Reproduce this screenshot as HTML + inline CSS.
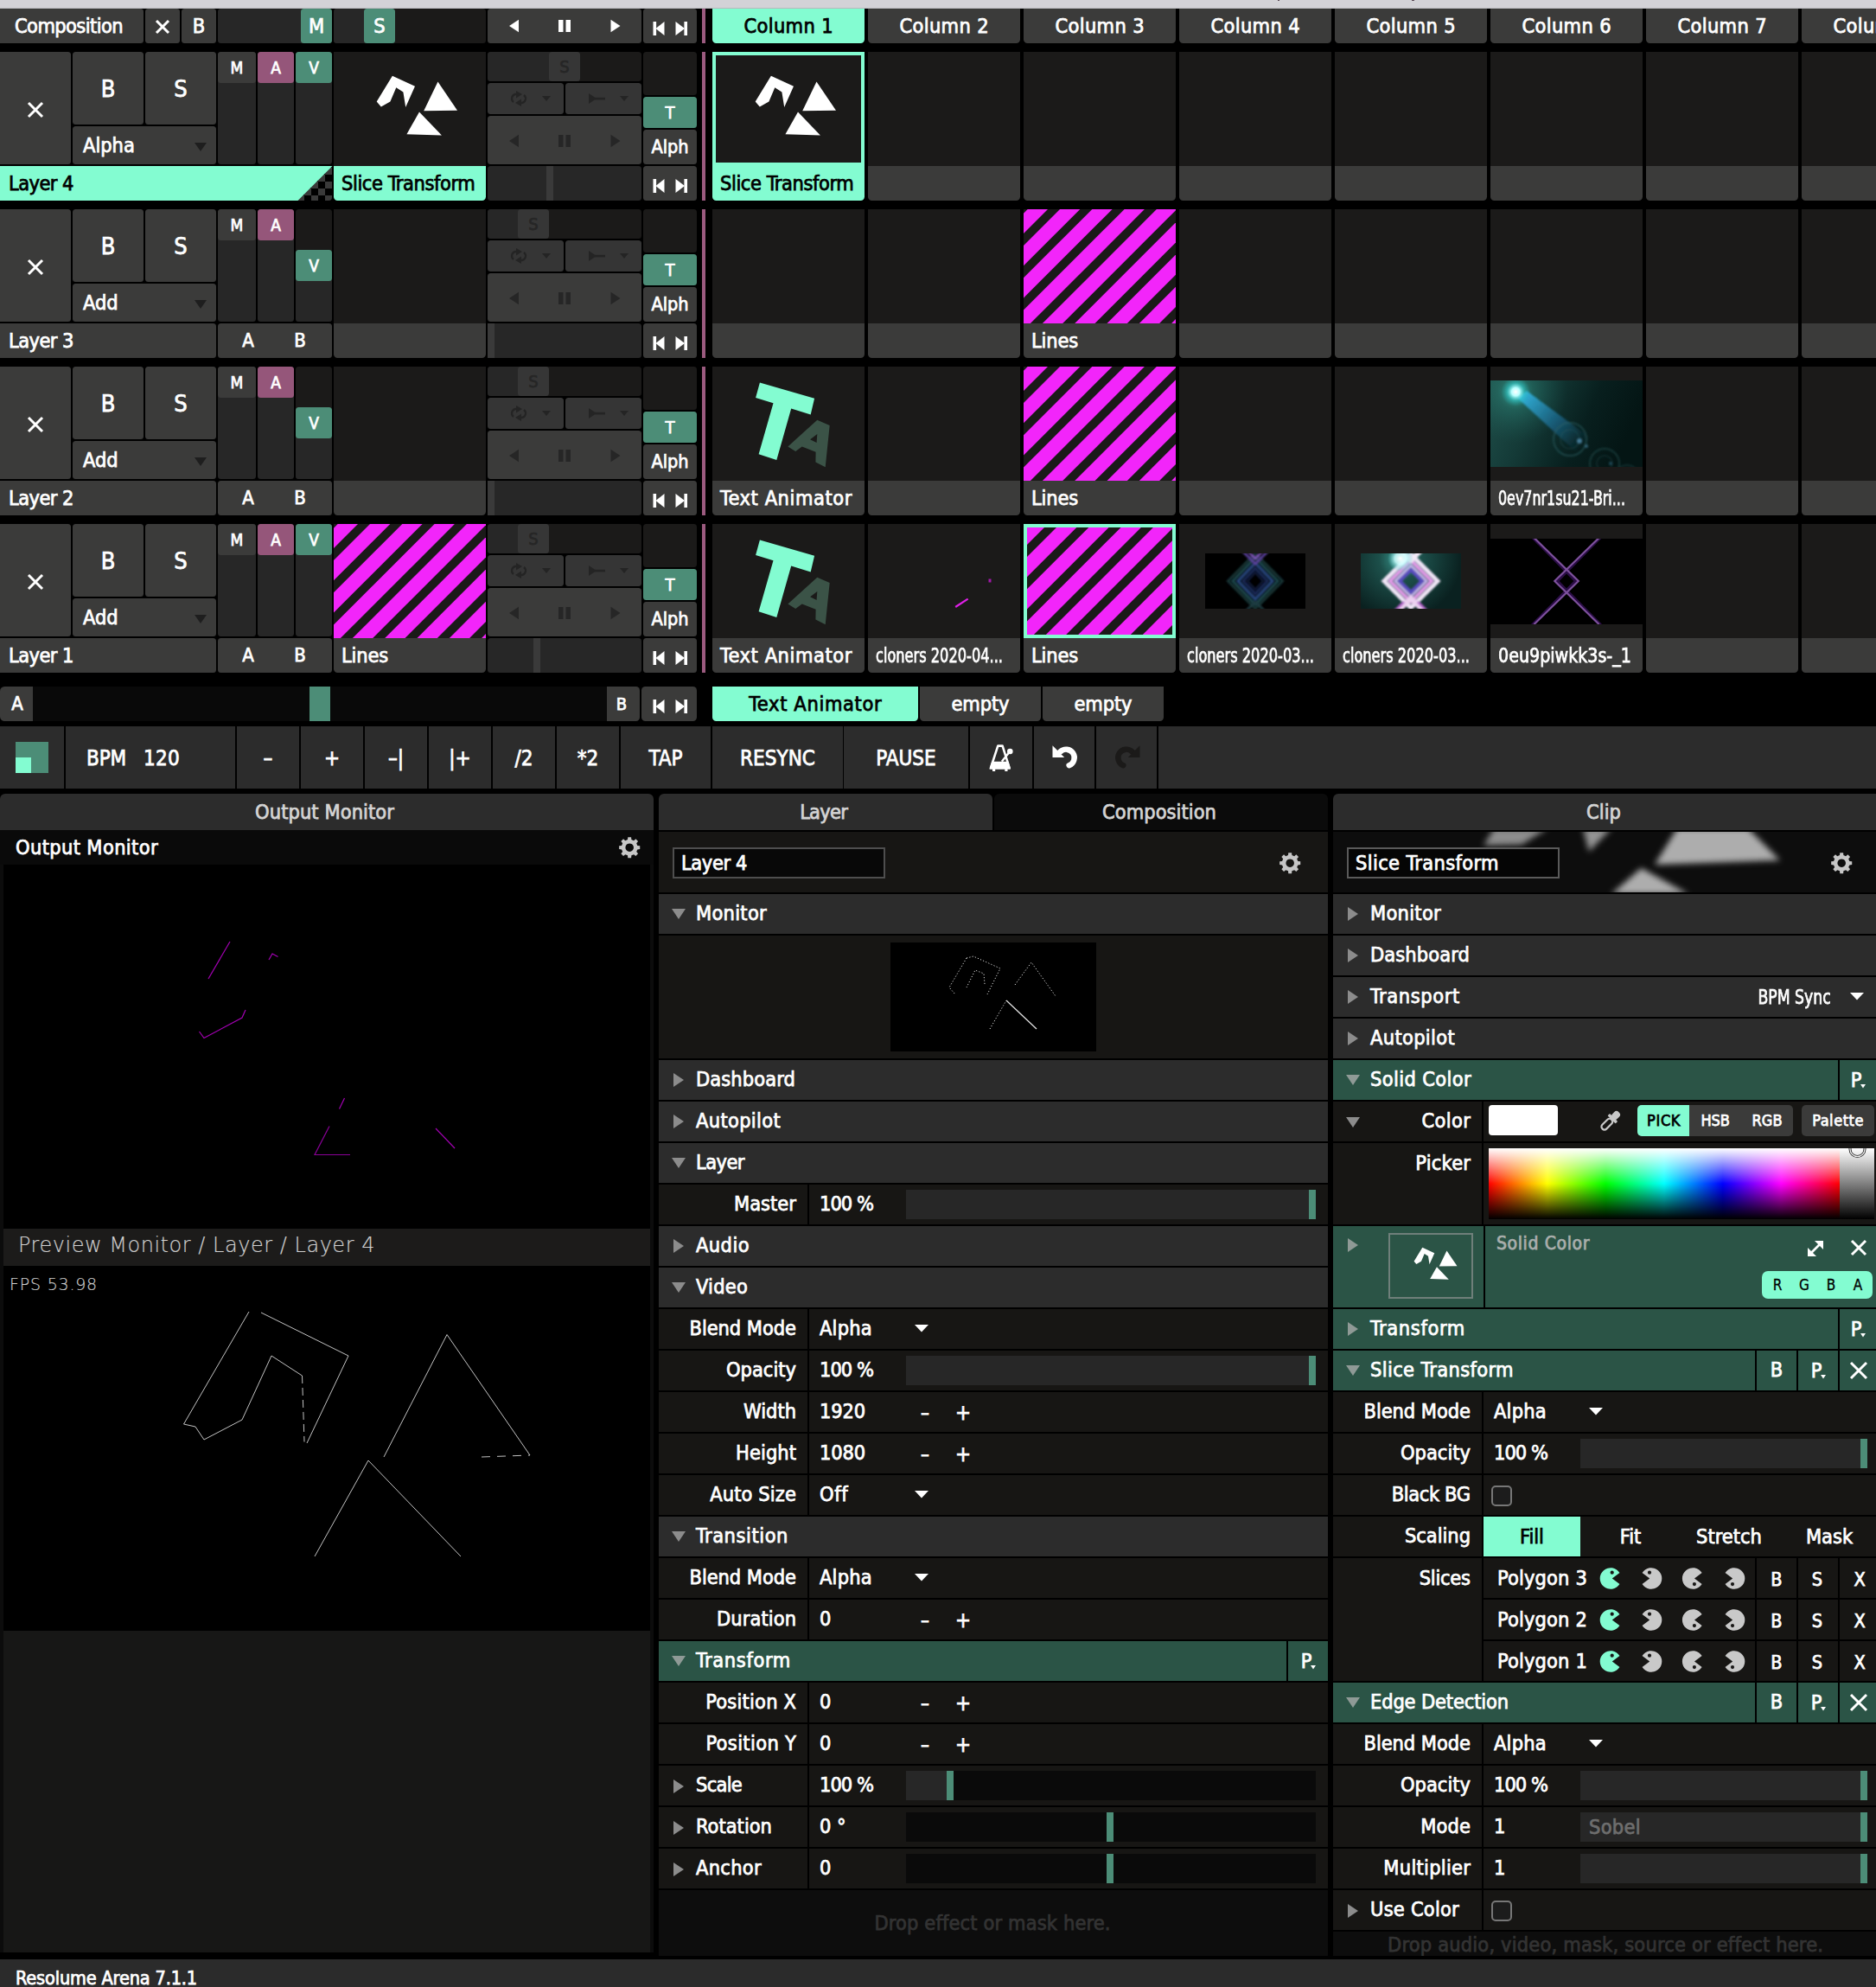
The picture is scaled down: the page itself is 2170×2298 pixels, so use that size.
<!DOCTYPE html>
<html><head><meta charset="utf-8"><title>Resolume Arena</title>
<style>
html,body{margin:0;padding:0;background:#000;}
body{width:2170px;height:2298px;position:relative;overflow:hidden;font-family:"DejaVu Sans Condensed","DejaVu Sans","Liberation Sans",sans-serif;font-stretch:condensed;}
body>div,body>span,body>svg{position:absolute;display:block;box-sizing:border-box;}
body>span{overflow:visible;-webkit-text-stroke:0.75px currentColor;}
</style></head><body>
<div style="left:0px;top:0px;width:2170px;height:10px;background:#d3d2d7;"></div>
<div style="left:0px;top:9px;width:2170px;height:1px;background:#b9b8bd;"></div>
<div style="left:1477.5px;top:0px;width:2.5px;height:1.2px;background:#5a4a55;"></div>
<div style="left:1633px;top:0px;width:2.5px;height:1.2px;background:#5a4a55;"></div>
<div style="left:0px;top:10px;width:166px;height:40px;background:#3b3b3a;border-radius:0 3.5px 3.5px 0;"></div>
<span style="top:10px;height:40px;line-height:40px;font-size:23.4px;color:#fff;white-space:nowrap;letter-spacing:-0.589px;left:17px;">Composition</span>
<div style="left:168px;top:10px;width:40px;height:40px;background:#3b3b3a;border-radius:3.5px;"></div>
<svg style="left:178.5px;top:21.5px;" width="18" height="18" viewBox="0 0 18 18"><path d="M2 2 L16 16 M16 2 L2 16" stroke="#fff" stroke-width="3" fill="none"/></svg>
<div style="left:210px;top:10px;width:40px;height:40px;background:#3b3b3a;border-radius:3.5px;"></div>
<span style="top:10px;height:40px;line-height:40px;font-size:23.4px;color:#fff;white-space:nowrap;left:-170px;width:800px;text-align:center;">B</span>
<div style="left:252px;top:10px;width:132px;height:40px;background:#272727;border-radius:3.5px;"></div>
<div style="left:348px;top:10px;width:36px;height:40px;background:#4c8d77;border-radius:3.5px;"></div>
<span style="top:10px;height:40px;line-height:40px;font-size:23.4px;color:#fff;white-space:nowrap;left:-34px;width:800px;text-align:center;">M</span>
<div style="left:386px;top:10px;width:176px;height:40px;background:#1b1a19;border-radius:3.5px;"></div>
<div style="left:386px;top:10px;width:40px;height:40px;background:#272727;border-radius:3.5px 0 0 3.5px;"></div>
<div style="left:421px;top:10px;width:36px;height:40px;background:#4c8d77;border-radius:3.5px;"></div>
<span style="top:10px;height:40px;line-height:40px;font-size:23.4px;color:#fff;white-space:nowrap;left:39px;width:800px;text-align:center;">S</span>
<div style="left:564px;top:10px;width:178px;height:40px;background:#3b3b3a;border-radius:3.5px;"></div>
<svg style="left:564px;top:10.2px;" width="178" height="40" viewBox="0 0 178 40"><polygon points="25,20 36,12.75 36,27.25" fill="#fff"/><rect x="82" y="13" width="5.5" height="14" fill="#fff"/><rect x="90.5" y="13" width="5.5" height="14" fill="#fff"/><polygon points="153.5,20 142.5,12.75 142.5,27.25" fill="#fff"/></svg>
<div style="left:744px;top:10px;width:62px;height:40px;background:#3b3b3a;border-radius:3.5px;"></div>
<svg style="left:744px;top:13px;" width="62" height="40" viewBox="0 0 62 40"><rect x="11.5" y="12" width="3.6" height="16" fill="#fff"/><polygon points="14.5,20 24.5,12 24.5,28" fill="#fff"/><polygon points="48,20 37.5,12 37.5,28" fill="#fff"/><rect x="47.4" y="12" width="3.6" height="16" fill="#fff"/></svg>
<div style="left:812px;top:10px;width:3.5px;height:40px;background:#9b5a7f;"></div>
<div style="left:0px;top:60px;width:82px;height:130px;background:#3b3b3a;border-radius:0 3.5px 3.5px 0;"></div>
<svg style="left:31px;top:117px;" width="20" height="20" viewBox="0 0 20 20"><path d="M2 2 L18 18 M18 2 L2 18" stroke="#fff" stroke-width="3" fill="none"/></svg>
<div style="left:84px;top:60px;width:82px;height:84px;background:#3b3b3a;border-radius:3.5px;"></div>
<span style="top:61px;height:84px;line-height:84px;font-size:27px;color:#fff;white-space:nowrap;left:-275px;width:800px;text-align:center;">B</span>
<div style="left:168px;top:60px;width:82px;height:84px;background:#3b3b3a;border-radius:3.5px;"></div>
<span style="top:61px;height:84px;line-height:84px;font-size:27px;color:#fff;white-space:nowrap;left:-191px;width:800px;text-align:center;">S</span>
<div style="left:84px;top:146px;width:166px;height:44px;background:#3b3b3a;border-radius:3.5px;"></div>
<span style="top:146px;height:44px;line-height:44px;font-size:23.4px;color:#fff;white-space:nowrap;left:96px;">Alpha</span>
<svg style="left:224px;top:164px;" width="16" height="12" viewBox="0 0 16 12"><polygon points="1,1 15,1 8,11" fill="#1e1e1e"/></svg>
<svg style="left:0px;top:192px;" width="386" height="40" viewBox="0 0 386 40"><defs><pattern id="chk" x="0" y="2" width="16" height="16" patternUnits="userSpaceOnUse"><rect width="16" height="16" fill="#000"/><rect x="8" y="0" width="8" height="8" fill="#3a3a3a"/><rect x="0" y="8" width="8" height="8" fill="#3a3a3a"/></pattern></defs><path d="M340 0 H384 V36 Q384 40 380 40 H340 Z" fill="url(#chk)"/><polygon points="0,0 384.5,0 344.5,40 0,40" fill="#83fcd1"/></svg>
<span style="top:192px;height:40px;line-height:40px;font-size:23.4px;color:#000;white-space:nowrap;letter-spacing:-0.537px;left:10px;">Layer 4</span>
<div style="left:252px;top:60px;width:44px;height:130px;background:#272727;border-radius:3.5px;"></div>
<div style="left:252px;top:60px;width:44px;height:36px;background:#3b3b3a;border-radius:3.5px;"></div>
<span style="top:60px;height:36px;line-height:36px;font-size:19px;color:#fff;white-space:nowrap;left:-126px;width:800px;text-align:center;">M</span>
<div style="left:298px;top:60px;width:42px;height:130px;background:#272727;border-radius:3.5px;"></div>
<div style="left:298px;top:60px;width:42px;height:36px;background:#95567a;border-radius:3.5px;"></div>
<span style="top:60px;height:36px;line-height:36px;font-size:19px;color:#fff;white-space:nowrap;left:-81px;width:800px;text-align:center;">A</span>
<div style="left:342px;top:60px;width:42px;height:130px;background:#272727;border-radius:3.5px;"></div>
<div style="left:342px;top:60px;width:42px;height:36px;background:#4c8d77;border-radius:3.5px;"></div>
<span style="top:60px;height:36px;line-height:36px;font-size:19px;color:#fff;white-space:nowrap;left:-37px;width:800px;text-align:center;">V</span>
<div style="left:386px;top:60px;width:176px;height:132px;background:#1b1a19;"></div>
<svg style="left:386px;top:60px;overflow:hidden;" width="176" height="132" viewBox="0 0 176 132"><polygon points="67.9,27.8 94,39.8 83.2,63.9 80.4,46.4 72.3,41.3 65.4,57.6 54.8,63.6 49.7,57.6" fill="#fff"/><polygon points="120.5,34.5 143,67.7 104.2,68.3" fill="#fff"/><polygon points="99,69.5 124.9,96.5 84.4,95.2" fill="#fff"/></svg>
<div style="left:386px;top:192px;width:176px;height:40px;background:#83fcd1;border-radius:0 0 4.5px 4.5px;"></div>
<span style="top:192px;height:40px;line-height:40px;font-size:23.4px;color:#000;white-space:nowrap;letter-spacing:-0.406px;left:395px;">Slice Transform</span>
<div style="left:564px;top:60px;width:178px;height:34px;background:#1b1a19;border-radius:3.5px;"></div>
<div style="left:564px;top:60px;width:81px;height:34px;background:#272727;border-radius:3.5px 0 0 3.5px;"></div>
<div style="left:635px;top:60px;width:36px;height:34px;background:#363636;border-radius:3.5px;"></div>
<span style="top:60px;height:34px;line-height:34px;font-size:20px;color:#262626;white-space:nowrap;left:253px;width:800px;text-align:center;">S</span>
<div style="left:564px;top:96px;width:88px;height:36px;background:#353535;border-radius:3.5px;"></div>
<div style="left:654px;top:96px;width:88px;height:36px;background:#353535;border-radius:3.5px;"></div>
<svg style="left:564px;top:96px;" width="88" height="36" viewBox="0 0 88 36"><g fill="none" stroke="#242424" stroke-width="2.4"><path d="M30 22 a5 5 0 1 1 6 -8 M42 14 a5 5 0 1 1 -6 8"/></g><polygon points="33,9 40,13 33,17.5" fill="#242424"/><polygon points="39,27 32,23 39,18.5" fill="#242424"/><polygon points="63,15 73,15 68,21" fill="#242424"/></svg>
<svg style="left:654px;top:96px;" width="88" height="36" viewBox="0 0 88 36"><polygon points="27,12 27,24 36,18" fill="#242424"/><rect x="34" y="16.8" width="12" height="2.6" fill="#242424"/><polygon points="63,15 73,15 68,21" fill="#242424"/></svg>
<div style="left:564px;top:134px;width:178px;height:56px;background:#3b3b3a;border-radius:3.5px;"></div>
<svg style="left:564px;top:143px;" width="178" height="40" viewBox="0 0 178 40"><polygon points="25,20 36,12.75 36,27.25" fill="#262626"/><rect x="82" y="13" width="5.5" height="14" fill="#262626"/><rect x="90.5" y="13" width="5.5" height="14" fill="#262626"/><polygon points="153.5,20 142.5,12.75 142.5,27.25" fill="#262626"/></svg>
<div style="left:564px;top:192px;width:178px;height:40px;background:#272727;border-radius:3.5px;"></div>
<div style="left:632px;top:192px;width:8px;height:40px;background:#3a3a3a;"></div>
<div style="left:744px;top:60px;width:62px;height:50px;background:#1b1a19;border-radius:3.5px;"></div>
<div style="left:744px;top:112px;width:62px;height:36px;background:#4c8d77;border-radius:3.5px;"></div>
<span style="top:112px;height:36px;line-height:36px;font-size:20px;color:#fff;white-space:nowrap;left:375px;width:800px;text-align:center;">T</span>
<div style="left:744px;top:150px;width:62px;height:40px;background:#3b3b3a;border-radius:3.5px;"></div>
<span style="top:150px;height:40px;line-height:40px;font-size:21.5px;color:#fff;white-space:nowrap;left:375px;width:800px;text-align:center;">Alph</span>
<div style="left:744px;top:192px;width:62px;height:40px;background:#3b3b3a;border-radius:3.5px;"></div>
<svg style="left:744px;top:195px;" width="62" height="40" viewBox="0 0 62 40"><rect x="11.5" y="12" width="3.6" height="16" fill="#fff"/><polygon points="14.5,20 24.5,12 24.5,28" fill="#fff"/><polygon points="48,20 37.5,12 37.5,28" fill="#fff"/><rect x="47.4" y="12" width="3.6" height="16" fill="#fff"/></svg>
<div style="left:812px;top:60px;width:3.5px;height:172px;background:#9b5a7f;"></div>
<div style="left:824px;top:60px;width:176px;height:132px;background:#1b1a19;"></div>
<svg style="left:824px;top:60px;overflow:hidden;" width="176" height="132" viewBox="0 0 176 132"><polygon points="67.9,27.8 94,39.8 83.2,63.9 80.4,46.4 72.3,41.3 65.4,57.6 54.8,63.6 49.7,57.6" fill="#fff"/><polygon points="120.5,34.5 143,67.7 104.2,68.3" fill="#fff"/><polygon points="99,69.5 124.9,96.5 84.4,95.2" fill="#fff"/></svg>
<div style="left:824px;top:192px;width:176px;height:40px;background:#83fcd1;border-radius:0 0 4.5px 4.5px;"></div>
<span style="top:192px;height:40px;line-height:40px;font-size:23.4px;color:#000;white-space:nowrap;letter-spacing:-0.406px;left:833px;">Slice Transform</span>
<div style="left:824px;top:60px;width:176px;height:132px;border:4px solid #83fcd1;border-bottom-width:4px;"></div>
<div style="left:1004px;top:60px;width:176px;height:132px;background:#1b1a19;"></div>
<div style="left:1004px;top:192px;width:176px;height:40px;background:#3b3b3a;border-radius:0 0 4.5px 4.5px;"></div>
<div style="left:1184px;top:60px;width:176px;height:132px;background:#1b1a19;"></div>
<div style="left:1184px;top:192px;width:176px;height:40px;background:#3b3b3a;border-radius:0 0 4.5px 4.5px;"></div>
<div style="left:1364px;top:60px;width:176px;height:132px;background:#1b1a19;"></div>
<div style="left:1364px;top:192px;width:176px;height:40px;background:#3b3b3a;border-radius:0 0 4.5px 4.5px;"></div>
<div style="left:1544px;top:60px;width:176px;height:132px;background:#1b1a19;"></div>
<div style="left:1544px;top:192px;width:176px;height:40px;background:#3b3b3a;border-radius:0 0 4.5px 4.5px;"></div>
<div style="left:1724px;top:60px;width:176px;height:132px;background:#1b1a19;"></div>
<div style="left:1724px;top:192px;width:176px;height:40px;background:#3b3b3a;border-radius:0 0 4.5px 4.5px;"></div>
<div style="left:1904px;top:60px;width:176px;height:132px;background:#1b1a19;"></div>
<div style="left:1904px;top:192px;width:176px;height:40px;background:#3b3b3a;border-radius:0 0 4.5px 4.5px;"></div>
<div style="left:2084px;top:60px;width:176px;height:132px;background:#1b1a19;"></div>
<div style="left:2084px;top:192px;width:176px;height:40px;background:#3b3b3a;border-radius:0 0 4.5px 4.5px;"></div>
<div style="left:0px;top:242px;width:82px;height:130px;background:#3b3b3a;border-radius:0 3.5px 3.5px 0;"></div>
<svg style="left:31px;top:299px;" width="20" height="20" viewBox="0 0 20 20"><path d="M2 2 L18 18 M18 2 L2 18" stroke="#fff" stroke-width="3" fill="none"/></svg>
<div style="left:84px;top:242px;width:82px;height:84px;background:#3b3b3a;border-radius:3.5px;"></div>
<span style="top:243px;height:84px;line-height:84px;font-size:27px;color:#fff;white-space:nowrap;left:-275px;width:800px;text-align:center;">B</span>
<div style="left:168px;top:242px;width:82px;height:84px;background:#3b3b3a;border-radius:3.5px;"></div>
<span style="top:243px;height:84px;line-height:84px;font-size:27px;color:#fff;white-space:nowrap;left:-191px;width:800px;text-align:center;">S</span>
<div style="left:84px;top:328px;width:166px;height:44px;background:#3b3b3a;border-radius:3.5px;"></div>
<span style="top:328px;height:44px;line-height:44px;font-size:23.4px;color:#fff;white-space:nowrap;left:96px;">Add</span>
<svg style="left:224px;top:346px;" width="16" height="12" viewBox="0 0 16 12"><polygon points="1,1 15,1 8,11" fill="#1e1e1e"/></svg>
<div style="left:0px;top:374px;width:250px;height:40px;background:#3b3b3a;border-radius:0 3.5px 3.5px 0;"></div>
<span style="top:374px;height:40px;line-height:40px;font-size:23.4px;color:#fff;white-space:nowrap;letter-spacing:-0.537px;left:10px;">Layer 3</span>
<div style="left:252px;top:374px;width:132px;height:40px;background:#3b3b3a;border-radius:3.5px;"></div>
<span style="top:374px;height:40px;line-height:40px;font-size:22px;color:#fff;white-space:nowrap;left:-113px;width:800px;text-align:center;">A</span>
<span style="top:374px;height:40px;line-height:40px;font-size:22px;color:#fff;white-space:nowrap;left:-53px;width:800px;text-align:center;">B</span>
<div style="left:252px;top:242px;width:44px;height:130px;background:#272727;border-radius:3.5px;"></div>
<div style="left:252px;top:242px;width:44px;height:36px;background:#3b3b3a;border-radius:3.5px;"></div>
<span style="top:242px;height:36px;line-height:36px;font-size:19px;color:#fff;white-space:nowrap;left:-126px;width:800px;text-align:center;">M</span>
<div style="left:298px;top:242px;width:42px;height:130px;background:#272727;border-radius:3.5px;"></div>
<div style="left:298px;top:242px;width:42px;height:36px;background:#95567a;border-radius:3.5px;"></div>
<span style="top:242px;height:36px;line-height:36px;font-size:19px;color:#fff;white-space:nowrap;left:-81px;width:800px;text-align:center;">A</span>
<div style="left:342px;top:242px;width:42px;height:130px;background:#1b1a19;border-radius:3.5px;"></div>
<div style="left:342px;top:302px;width:42px;height:70px;background:#272727;border-radius:0 0 3.5px 3.5px;"></div>
<div style="left:342px;top:289px;width:42px;height:36px;background:#4c8d77;border-radius:3.5px;"></div>
<span style="top:289px;height:36px;line-height:36px;font-size:19px;color:#fff;white-space:nowrap;left:-37px;width:800px;text-align:center;">V</span>
<div style="left:386px;top:242px;width:176px;height:132px;background:#1b1a19;"></div>
<div style="left:386px;top:374px;width:176px;height:40px;background:#3b3b3a;border-radius:0 0 4.5px 4.5px;"></div>
<div style="left:564px;top:242px;width:178px;height:34px;background:#1b1a19;border-radius:3.5px;"></div>
<div style="left:564px;top:242px;width:45px;height:34px;background:#272727;border-radius:3.5px 0 0 3.5px;"></div>
<div style="left:599px;top:242px;width:36px;height:34px;background:#363636;border-radius:3.5px;"></div>
<span style="top:242px;height:34px;line-height:34px;font-size:20px;color:#262626;white-space:nowrap;left:217px;width:800px;text-align:center;">S</span>
<div style="left:564px;top:278px;width:88px;height:36px;background:#353535;border-radius:3.5px;"></div>
<div style="left:654px;top:278px;width:88px;height:36px;background:#353535;border-radius:3.5px;"></div>
<svg style="left:564px;top:278px;" width="88" height="36" viewBox="0 0 88 36"><g fill="none" stroke="#242424" stroke-width="2.4"><path d="M30 22 a5 5 0 1 1 6 -8 M42 14 a5 5 0 1 1 -6 8"/></g><polygon points="33,9 40,13 33,17.5" fill="#242424"/><polygon points="39,27 32,23 39,18.5" fill="#242424"/><polygon points="63,15 73,15 68,21" fill="#242424"/></svg>
<svg style="left:654px;top:278px;" width="88" height="36" viewBox="0 0 88 36"><polygon points="27,12 27,24 36,18" fill="#242424"/><rect x="34" y="16.8" width="12" height="2.6" fill="#242424"/><polygon points="63,15 73,15 68,21" fill="#242424"/></svg>
<div style="left:564px;top:316px;width:178px;height:56px;background:#3b3b3a;border-radius:3.5px;"></div>
<svg style="left:564px;top:325px;" width="178" height="40" viewBox="0 0 178 40"><polygon points="25,20 36,12.75 36,27.25" fill="#262626"/><rect x="82" y="13" width="5.5" height="14" fill="#262626"/><rect x="90.5" y="13" width="5.5" height="14" fill="#262626"/><polygon points="153.5,20 142.5,12.75 142.5,27.25" fill="#262626"/></svg>
<div style="left:564px;top:374px;width:178px;height:40px;background:#272727;border-radius:3.5px;"></div>
<div style="left:564px;top:374px;width:8px;height:40px;background:#3a3a3a;"></div>
<div style="left:744px;top:242px;width:62px;height:50px;background:#1b1a19;border-radius:3.5px;"></div>
<div style="left:744px;top:294px;width:62px;height:36px;background:#4c8d77;border-radius:3.5px;"></div>
<span style="top:294px;height:36px;line-height:36px;font-size:20px;color:#fff;white-space:nowrap;left:375px;width:800px;text-align:center;">T</span>
<div style="left:744px;top:332px;width:62px;height:40px;background:#3b3b3a;border-radius:3.5px;"></div>
<span style="top:332px;height:40px;line-height:40px;font-size:21.5px;color:#fff;white-space:nowrap;left:375px;width:800px;text-align:center;">Alph</span>
<div style="left:744px;top:374px;width:62px;height:40px;background:#3b3b3a;border-radius:3.5px;"></div>
<svg style="left:744px;top:377px;" width="62" height="40" viewBox="0 0 62 40"><rect x="11.5" y="12" width="3.6" height="16" fill="#fff"/><polygon points="14.5,20 24.5,12 24.5,28" fill="#fff"/><polygon points="48,20 37.5,12 37.5,28" fill="#fff"/><rect x="47.4" y="12" width="3.6" height="16" fill="#fff"/></svg>
<div style="left:812px;top:242px;width:3.5px;height:172px;background:#9b5a7f;"></div>
<div style="left:824px;top:242px;width:176px;height:132px;background:#1b1a19;"></div>
<div style="left:824px;top:374px;width:176px;height:40px;background:#3b3b3a;border-radius:0 0 4.5px 4.5px;"></div>
<div style="left:1004px;top:242px;width:176px;height:132px;background:#1b1a19;"></div>
<div style="left:1004px;top:374px;width:176px;height:40px;background:#3b3b3a;border-radius:0 0 4.5px 4.5px;"></div>
<div style="left:1184px;top:242px;width:176px;height:132px;background:#1b1a19;"></div>
<svg style="left:1184px;top:242px;overflow:hidden;" width="176" height="132" viewBox="0 0 176 132"><rect width="176" height="132" fill="#f225fa"/><line x1="-29.6" y1="-10" x2="-189.6" y2="150" stroke="#1b1a19" stroke-width="9.9"/><line x1="7.7" y1="-10" x2="-152.3" y2="150" stroke="#1b1a19" stroke-width="9.9"/><line x1="45" y1="-10" x2="-115" y2="150" stroke="#1b1a19" stroke-width="9.9"/><line x1="82.3" y1="-10" x2="-77.7" y2="150" stroke="#1b1a19" stroke-width="9.9"/><line x1="119.6" y1="-10" x2="-40.4" y2="150" stroke="#1b1a19" stroke-width="9.9"/><line x1="156.9" y1="-10" x2="-3.1" y2="150" stroke="#1b1a19" stroke-width="9.9"/><line x1="194.2" y1="-10" x2="34.2" y2="150" stroke="#1b1a19" stroke-width="9.9"/><line x1="231.5" y1="-10" x2="71.5" y2="150" stroke="#1b1a19" stroke-width="9.9"/><line x1="268.8" y1="-10" x2="108.8" y2="150" stroke="#1b1a19" stroke-width="9.9"/><line x1="306.1" y1="-10" x2="146.1" y2="150" stroke="#1b1a19" stroke-width="9.9"/><line x1="343.4" y1="-10" x2="183.4" y2="150" stroke="#1b1a19" stroke-width="9.9"/></svg>
<div style="left:1184px;top:374px;width:176px;height:40px;background:#3b3b3a;border-radius:0 0 4.5px 4.5px;"></div>
<span style="top:374px;height:40px;line-height:40px;font-size:23.4px;color:#fff;white-space:nowrap;letter-spacing:-0.169px;left:1193px;">Lines</span>
<div style="left:1364px;top:242px;width:176px;height:132px;background:#1b1a19;"></div>
<div style="left:1364px;top:374px;width:176px;height:40px;background:#3b3b3a;border-radius:0 0 4.5px 4.5px;"></div>
<div style="left:1544px;top:242px;width:176px;height:132px;background:#1b1a19;"></div>
<div style="left:1544px;top:374px;width:176px;height:40px;background:#3b3b3a;border-radius:0 0 4.5px 4.5px;"></div>
<div style="left:1724px;top:242px;width:176px;height:132px;background:#1b1a19;"></div>
<div style="left:1724px;top:374px;width:176px;height:40px;background:#3b3b3a;border-radius:0 0 4.5px 4.5px;"></div>
<div style="left:1904px;top:242px;width:176px;height:132px;background:#1b1a19;"></div>
<div style="left:1904px;top:374px;width:176px;height:40px;background:#3b3b3a;border-radius:0 0 4.5px 4.5px;"></div>
<div style="left:2084px;top:242px;width:176px;height:132px;background:#1b1a19;"></div>
<div style="left:2084px;top:374px;width:176px;height:40px;background:#3b3b3a;border-radius:0 0 4.5px 4.5px;"></div>
<div style="left:0px;top:424px;width:82px;height:130px;background:#3b3b3a;border-radius:0 3.5px 3.5px 0;"></div>
<svg style="left:31px;top:481px;" width="20" height="20" viewBox="0 0 20 20"><path d="M2 2 L18 18 M18 2 L2 18" stroke="#fff" stroke-width="3" fill="none"/></svg>
<div style="left:84px;top:424px;width:82px;height:84px;background:#3b3b3a;border-radius:3.5px;"></div>
<span style="top:425px;height:84px;line-height:84px;font-size:27px;color:#fff;white-space:nowrap;left:-275px;width:800px;text-align:center;">B</span>
<div style="left:168px;top:424px;width:82px;height:84px;background:#3b3b3a;border-radius:3.5px;"></div>
<span style="top:425px;height:84px;line-height:84px;font-size:27px;color:#fff;white-space:nowrap;left:-191px;width:800px;text-align:center;">S</span>
<div style="left:84px;top:510px;width:166px;height:44px;background:#3b3b3a;border-radius:3.5px;"></div>
<span style="top:510px;height:44px;line-height:44px;font-size:23.4px;color:#fff;white-space:nowrap;left:96px;">Add</span>
<svg style="left:224px;top:528px;" width="16" height="12" viewBox="0 0 16 12"><polygon points="1,1 15,1 8,11" fill="#1e1e1e"/></svg>
<div style="left:0px;top:556px;width:250px;height:40px;background:#3b3b3a;border-radius:0 3.5px 3.5px 0;"></div>
<span style="top:556px;height:40px;line-height:40px;font-size:23.4px;color:#fff;white-space:nowrap;letter-spacing:-0.537px;left:10px;">Layer 2</span>
<div style="left:252px;top:556px;width:132px;height:40px;background:#3b3b3a;border-radius:3.5px;"></div>
<span style="top:556px;height:40px;line-height:40px;font-size:22px;color:#fff;white-space:nowrap;left:-113px;width:800px;text-align:center;">A</span>
<span style="top:556px;height:40px;line-height:40px;font-size:22px;color:#fff;white-space:nowrap;left:-53px;width:800px;text-align:center;">B</span>
<div style="left:252px;top:424px;width:44px;height:130px;background:#272727;border-radius:3.5px;"></div>
<div style="left:252px;top:424px;width:44px;height:36px;background:#3b3b3a;border-radius:3.5px;"></div>
<span style="top:424px;height:36px;line-height:36px;font-size:19px;color:#fff;white-space:nowrap;left:-126px;width:800px;text-align:center;">M</span>
<div style="left:298px;top:424px;width:42px;height:130px;background:#272727;border-radius:3.5px;"></div>
<div style="left:298px;top:424px;width:42px;height:36px;background:#95567a;border-radius:3.5px;"></div>
<span style="top:424px;height:36px;line-height:36px;font-size:19px;color:#fff;white-space:nowrap;left:-81px;width:800px;text-align:center;">A</span>
<div style="left:342px;top:424px;width:42px;height:130px;background:#1b1a19;border-radius:3.5px;"></div>
<div style="left:342px;top:484px;width:42px;height:70px;background:#272727;border-radius:0 0 3.5px 3.5px;"></div>
<div style="left:342px;top:471px;width:42px;height:36px;background:#4c8d77;border-radius:3.5px;"></div>
<span style="top:471px;height:36px;line-height:36px;font-size:19px;color:#fff;white-space:nowrap;left:-37px;width:800px;text-align:center;">V</span>
<div style="left:386px;top:424px;width:176px;height:132px;background:#1b1a19;"></div>
<div style="left:386px;top:556px;width:176px;height:40px;background:#3b3b3a;border-radius:0 0 4.5px 4.5px;"></div>
<div style="left:564px;top:424px;width:178px;height:34px;background:#1b1a19;border-radius:3.5px;"></div>
<div style="left:564px;top:424px;width:45px;height:34px;background:#272727;border-radius:3.5px 0 0 3.5px;"></div>
<div style="left:599px;top:424px;width:36px;height:34px;background:#363636;border-radius:3.5px;"></div>
<span style="top:424px;height:34px;line-height:34px;font-size:20px;color:#262626;white-space:nowrap;left:217px;width:800px;text-align:center;">S</span>
<div style="left:564px;top:460px;width:88px;height:36px;background:#353535;border-radius:3.5px;"></div>
<div style="left:654px;top:460px;width:88px;height:36px;background:#353535;border-radius:3.5px;"></div>
<svg style="left:564px;top:460px;" width="88" height="36" viewBox="0 0 88 36"><g fill="none" stroke="#242424" stroke-width="2.4"><path d="M30 22 a5 5 0 1 1 6 -8 M42 14 a5 5 0 1 1 -6 8"/></g><polygon points="33,9 40,13 33,17.5" fill="#242424"/><polygon points="39,27 32,23 39,18.5" fill="#242424"/><polygon points="63,15 73,15 68,21" fill="#242424"/></svg>
<svg style="left:654px;top:460px;" width="88" height="36" viewBox="0 0 88 36"><polygon points="27,12 27,24 36,18" fill="#242424"/><rect x="34" y="16.8" width="12" height="2.6" fill="#242424"/><polygon points="63,15 73,15 68,21" fill="#242424"/></svg>
<div style="left:564px;top:498px;width:178px;height:56px;background:#3b3b3a;border-radius:3.5px;"></div>
<svg style="left:564px;top:507px;" width="178" height="40" viewBox="0 0 178 40"><polygon points="25,20 36,12.75 36,27.25" fill="#262626"/><rect x="82" y="13" width="5.5" height="14" fill="#262626"/><rect x="90.5" y="13" width="5.5" height="14" fill="#262626"/><polygon points="153.5,20 142.5,12.75 142.5,27.25" fill="#262626"/></svg>
<div style="left:564px;top:556px;width:178px;height:40px;background:#272727;border-radius:3.5px;"></div>
<div style="left:564px;top:556px;width:8px;height:40px;background:#3a3a3a;"></div>
<div style="left:744px;top:424px;width:62px;height:50px;background:#1b1a19;border-radius:3.5px;"></div>
<div style="left:744px;top:476px;width:62px;height:36px;background:#4c8d77;border-radius:3.5px;"></div>
<span style="top:476px;height:36px;line-height:36px;font-size:20px;color:#fff;white-space:nowrap;left:375px;width:800px;text-align:center;">T</span>
<div style="left:744px;top:514px;width:62px;height:40px;background:#3b3b3a;border-radius:3.5px;"></div>
<span style="top:514px;height:40px;line-height:40px;font-size:21.5px;color:#fff;white-space:nowrap;left:375px;width:800px;text-align:center;">Alph</span>
<div style="left:744px;top:556px;width:62px;height:40px;background:#3b3b3a;border-radius:3.5px;"></div>
<svg style="left:744px;top:559px;" width="62" height="40" viewBox="0 0 62 40"><rect x="11.5" y="12" width="3.6" height="16" fill="#fff"/><polygon points="14.5,20 24.5,12 24.5,28" fill="#fff"/><polygon points="48,20 37.5,12 37.5,28" fill="#fff"/><rect x="47.4" y="12" width="3.6" height="16" fill="#fff"/></svg>
<div style="left:812px;top:424px;width:3.5px;height:172px;background:#9b5a7f;"></div>
<div style="left:824px;top:424px;width:176px;height:132px;background:#1b1a19;"></div>
<svg style="left:824px;top:424px;overflow:hidden;" width="176" height="132" viewBox="0 0 176 132"><polygon points="54.9,18.5 118.1,36.7 113.7,55.5 91.2,48.6 74.3,108.1 53.6,101.2 70.5,42.3 50.1,36.1" fill="#83fcd1"/><path d="M121.3 61.8 L135.7 68 L130.7 116.2 L119.4 110.6 L119.6 98.7 L103.7 92.4 L96.2 98.1 L87.4 92.4 Z M121.3 78 L113.1 84.3 L120.6 88.1 Z" fill="#3b5347" fill-rule="evenodd"/></svg>
<div style="left:824px;top:556px;width:176px;height:40px;background:#3b3b3a;border-radius:0 0 4.5px 4.5px;"></div>
<span style="top:556px;height:40px;line-height:40px;font-size:23.4px;color:#fff;white-space:nowrap;letter-spacing:0.570px;left:833px;">Text Animator</span>
<div style="left:1004px;top:424px;width:176px;height:132px;background:#1b1a19;"></div>
<div style="left:1004px;top:556px;width:176px;height:40px;background:#3b3b3a;border-radius:0 0 4.5px 4.5px;"></div>
<div style="left:1184px;top:424px;width:176px;height:132px;background:#1b1a19;"></div>
<svg style="left:1184px;top:424px;overflow:hidden;" width="176" height="132" viewBox="0 0 176 132"><rect width="176" height="132" fill="#f225fa"/><line x1="-29.6" y1="-10" x2="-189.6" y2="150" stroke="#1b1a19" stroke-width="9.9"/><line x1="7.7" y1="-10" x2="-152.3" y2="150" stroke="#1b1a19" stroke-width="9.9"/><line x1="45" y1="-10" x2="-115" y2="150" stroke="#1b1a19" stroke-width="9.9"/><line x1="82.3" y1="-10" x2="-77.7" y2="150" stroke="#1b1a19" stroke-width="9.9"/><line x1="119.6" y1="-10" x2="-40.4" y2="150" stroke="#1b1a19" stroke-width="9.9"/><line x1="156.9" y1="-10" x2="-3.1" y2="150" stroke="#1b1a19" stroke-width="9.9"/><line x1="194.2" y1="-10" x2="34.2" y2="150" stroke="#1b1a19" stroke-width="9.9"/><line x1="231.5" y1="-10" x2="71.5" y2="150" stroke="#1b1a19" stroke-width="9.9"/><line x1="268.8" y1="-10" x2="108.8" y2="150" stroke="#1b1a19" stroke-width="9.9"/><line x1="306.1" y1="-10" x2="146.1" y2="150" stroke="#1b1a19" stroke-width="9.9"/><line x1="343.4" y1="-10" x2="183.4" y2="150" stroke="#1b1a19" stroke-width="9.9"/></svg>
<div style="left:1184px;top:556px;width:176px;height:40px;background:#3b3b3a;border-radius:0 0 4.5px 4.5px;"></div>
<span style="top:556px;height:40px;line-height:40px;font-size:23.4px;color:#fff;white-space:nowrap;letter-spacing:-0.169px;left:1193px;">Lines</span>
<div style="left:1364px;top:424px;width:176px;height:132px;background:#1b1a19;"></div>
<div style="left:1364px;top:556px;width:176px;height:40px;background:#3b3b3a;border-radius:0 0 4.5px 4.5px;"></div>
<div style="left:1544px;top:424px;width:176px;height:132px;background:#1b1a19;"></div>
<div style="left:1544px;top:556px;width:176px;height:40px;background:#3b3b3a;border-radius:0 0 4.5px 4.5px;"></div>
<div style="left:1724px;top:424px;width:176px;height:132px;background:#1b1a19;"></div>
<svg style="left:1724px;top:424px;overflow:hidden;" width="176" height="132" viewBox="0 0 176 132"><defs><linearGradient id="fl0" x1="0" y1="0" x2="1" y2="0.25"><stop offset="0" stop-color="#1f4f4a"/><stop offset="0.35" stop-color="#143a37"/><stop offset="0.7" stop-color="#081f1e"/><stop offset="1" stop-color="#041514"/></linearGradient><radialGradient id="fl1" cx="29" cy="29" r="60" gradientUnits="userSpaceOnUse"><stop offset="0" stop-color="#3aa89a" stop-opacity="0.9"/><stop offset="0.35" stop-color="#2a8074" stop-opacity="0.45"/><stop offset="1" stop-color="#1f5f58" stop-opacity="0"/></radialGradient><radialGradient id="fl2" cx="0.5" cy="0.5" r="0.5"><stop offset="0" stop-color="#fff"/><stop offset="0.28" stop-color="#b8ffff"/><stop offset="0.6" stop-color="#3cc" stop-opacity="0.55"/><stop offset="1" stop-color="#2aa" stop-opacity="0"/></radialGradient><linearGradient id="fl3" x1="0" y1="0" x2="1" y2="0.75"><stop offset="0" stop-color="#35c0f0" stop-opacity="0.95"/><stop offset="0.6" stop-color="#1e78a8" stop-opacity="0.55"/><stop offset="1" stop-color="#1a6a90" stop-opacity="0"/></linearGradient><filter id="flb" x="-20%" y="-20%" width="140%" height="140%"><feGaussianBlur stdDeviation="1.1"/></filter></defs><rect x="0" y="16" width="176" height="100" fill="url(#fl0)"/><rect x="0" y="16" width="176" height="100" fill="url(#fl1)"/><g filter="url(#flb)"><polygon points="31,36 42,28 118,84 98,98" fill="url(#fl3)"/><circle cx="92" cy="84" r="19" fill="none" stroke="#2e6468" stroke-width="2" opacity="0.5"/><circle cx="92" cy="84" r="11" fill="none" stroke="#2e6468" stroke-width="1.5" opacity="0.3"/><circle cx="132" cy="112" r="17" fill="none" stroke="#2a5a5c" stroke-width="2" opacity="0.45"/><circle cx="132" cy="112" r="9" fill="none" stroke="#2a5a5c" stroke-width="1.5" opacity="0.3"/><circle cx="158" cy="128" r="14" fill="none" stroke="#2a5a5c" stroke-width="2" opacity="0.35"/><circle cx="103" cy="86" r="3" fill="#5a9ac0" opacity="0.7"/><circle cx="111" cy="92" r="2" fill="#4a8aa8" opacity="0.6"/><circle cx="139" cy="112" r="2" fill="#3a7a98" opacity="0.5"/></g><circle cx="29.2" cy="29.2" r="17" fill="url(#fl2)"/><rect x="0" y="0" width="176" height="16" fill="#1b1a19"/><rect x="0" y="116" width="176" height="16" fill="#1b1a19"/></svg>
<div style="left:1724px;top:556px;width:176px;height:40px;background:#3b3b3a;border-radius:0 0 4.5px 4.5px;"></div>
<span style="top:556px;height:40px;line-height:40px;font-size:23.4px;color:#fff;white-space:nowrap;transform-origin:0 50%;transform:scaleX(0.756005);left:1733px;">0ev7nr1su21-Bri...</span>
<div style="left:1904px;top:424px;width:176px;height:132px;background:#1b1a19;"></div>
<div style="left:1904px;top:556px;width:176px;height:40px;background:#3b3b3a;border-radius:0 0 4.5px 4.5px;"></div>
<div style="left:2084px;top:424px;width:176px;height:132px;background:#1b1a19;"></div>
<div style="left:2084px;top:556px;width:176px;height:40px;background:#3b3b3a;border-radius:0 0 4.5px 4.5px;"></div>
<div style="left:0px;top:606px;width:82px;height:130px;background:#3b3b3a;border-radius:0 3.5px 3.5px 0;"></div>
<svg style="left:31px;top:663px;" width="20" height="20" viewBox="0 0 20 20"><path d="M2 2 L18 18 M18 2 L2 18" stroke="#fff" stroke-width="3" fill="none"/></svg>
<div style="left:84px;top:606px;width:82px;height:84px;background:#3b3b3a;border-radius:3.5px;"></div>
<span style="top:607px;height:84px;line-height:84px;font-size:27px;color:#fff;white-space:nowrap;left:-275px;width:800px;text-align:center;">B</span>
<div style="left:168px;top:606px;width:82px;height:84px;background:#3b3b3a;border-radius:3.5px;"></div>
<span style="top:607px;height:84px;line-height:84px;font-size:27px;color:#fff;white-space:nowrap;left:-191px;width:800px;text-align:center;">S</span>
<div style="left:84px;top:692px;width:166px;height:44px;background:#3b3b3a;border-radius:3.5px;"></div>
<span style="top:692px;height:44px;line-height:44px;font-size:23.4px;color:#fff;white-space:nowrap;left:96px;">Add</span>
<svg style="left:224px;top:710px;" width="16" height="12" viewBox="0 0 16 12"><polygon points="1,1 15,1 8,11" fill="#1e1e1e"/></svg>
<div style="left:0px;top:738px;width:250px;height:40px;background:#3b3b3a;border-radius:0 3.5px 3.5px 0;"></div>
<span style="top:738px;height:40px;line-height:40px;font-size:23.4px;color:#fff;white-space:nowrap;letter-spacing:-0.537px;left:10px;">Layer 1</span>
<div style="left:252px;top:738px;width:132px;height:40px;background:#3b3b3a;border-radius:3.5px;"></div>
<span style="top:738px;height:40px;line-height:40px;font-size:22px;color:#fff;white-space:nowrap;left:-113px;width:800px;text-align:center;">A</span>
<span style="top:738px;height:40px;line-height:40px;font-size:22px;color:#fff;white-space:nowrap;left:-53px;width:800px;text-align:center;">B</span>
<div style="left:252px;top:606px;width:44px;height:130px;background:#272727;border-radius:3.5px;"></div>
<div style="left:252px;top:606px;width:44px;height:36px;background:#3b3b3a;border-radius:3.5px;"></div>
<span style="top:606px;height:36px;line-height:36px;font-size:19px;color:#fff;white-space:nowrap;left:-126px;width:800px;text-align:center;">M</span>
<div style="left:298px;top:606px;width:42px;height:130px;background:#272727;border-radius:3.5px;"></div>
<div style="left:298px;top:606px;width:42px;height:36px;background:#95567a;border-radius:3.5px;"></div>
<span style="top:606px;height:36px;line-height:36px;font-size:19px;color:#fff;white-space:nowrap;left:-81px;width:800px;text-align:center;">A</span>
<div style="left:342px;top:606px;width:42px;height:130px;background:#272727;border-radius:3.5px;"></div>
<div style="left:342px;top:606px;width:42px;height:36px;background:#4c8d77;border-radius:3.5px;"></div>
<span style="top:606px;height:36px;line-height:36px;font-size:19px;color:#fff;white-space:nowrap;left:-37px;width:800px;text-align:center;">V</span>
<div style="left:386px;top:606px;width:176px;height:132px;background:#1b1a19;"></div>
<svg style="left:386px;top:606px;overflow:hidden;" width="176" height="132" viewBox="0 0 176 132"><rect width="176" height="132" fill="#f225fa"/><line x1="-29.6" y1="-10" x2="-189.6" y2="150" stroke="#1b1a19" stroke-width="9.9"/><line x1="7.7" y1="-10" x2="-152.3" y2="150" stroke="#1b1a19" stroke-width="9.9"/><line x1="45" y1="-10" x2="-115" y2="150" stroke="#1b1a19" stroke-width="9.9"/><line x1="82.3" y1="-10" x2="-77.7" y2="150" stroke="#1b1a19" stroke-width="9.9"/><line x1="119.6" y1="-10" x2="-40.4" y2="150" stroke="#1b1a19" stroke-width="9.9"/><line x1="156.9" y1="-10" x2="-3.1" y2="150" stroke="#1b1a19" stroke-width="9.9"/><line x1="194.2" y1="-10" x2="34.2" y2="150" stroke="#1b1a19" stroke-width="9.9"/><line x1="231.5" y1="-10" x2="71.5" y2="150" stroke="#1b1a19" stroke-width="9.9"/><line x1="268.8" y1="-10" x2="108.8" y2="150" stroke="#1b1a19" stroke-width="9.9"/><line x1="306.1" y1="-10" x2="146.1" y2="150" stroke="#1b1a19" stroke-width="9.9"/><line x1="343.4" y1="-10" x2="183.4" y2="150" stroke="#1b1a19" stroke-width="9.9"/></svg>
<div style="left:386px;top:738px;width:176px;height:40px;background:#3b3b3a;border-radius:0 0 4.5px 4.5px;"></div>
<span style="top:738px;height:40px;line-height:40px;font-size:23.4px;color:#fff;white-space:nowrap;letter-spacing:-0.169px;left:395px;">Lines</span>
<div style="left:564px;top:606px;width:178px;height:34px;background:#1b1a19;border-radius:3.5px;"></div>
<div style="left:564px;top:606px;width:45px;height:34px;background:#272727;border-radius:3.5px 0 0 3.5px;"></div>
<div style="left:599px;top:606px;width:36px;height:34px;background:#363636;border-radius:3.5px;"></div>
<span style="top:606px;height:34px;line-height:34px;font-size:20px;color:#262626;white-space:nowrap;left:217px;width:800px;text-align:center;">S</span>
<div style="left:564px;top:642px;width:88px;height:36px;background:#353535;border-radius:3.5px;"></div>
<div style="left:654px;top:642px;width:88px;height:36px;background:#353535;border-radius:3.5px;"></div>
<svg style="left:564px;top:642px;" width="88" height="36" viewBox="0 0 88 36"><g fill="none" stroke="#242424" stroke-width="2.4"><path d="M30 22 a5 5 0 1 1 6 -8 M42 14 a5 5 0 1 1 -6 8"/></g><polygon points="33,9 40,13 33,17.5" fill="#242424"/><polygon points="39,27 32,23 39,18.5" fill="#242424"/><polygon points="63,15 73,15 68,21" fill="#242424"/></svg>
<svg style="left:654px;top:642px;" width="88" height="36" viewBox="0 0 88 36"><polygon points="27,12 27,24 36,18" fill="#242424"/><rect x="34" y="16.8" width="12" height="2.6" fill="#242424"/><polygon points="63,15 73,15 68,21" fill="#242424"/></svg>
<div style="left:564px;top:680px;width:178px;height:56px;background:#3b3b3a;border-radius:3.5px;"></div>
<svg style="left:564px;top:689px;" width="178" height="40" viewBox="0 0 178 40"><polygon points="25,20 36,12.75 36,27.25" fill="#262626"/><rect x="82" y="13" width="5.5" height="14" fill="#262626"/><rect x="90.5" y="13" width="5.5" height="14" fill="#262626"/><polygon points="153.5,20 142.5,12.75 142.5,27.25" fill="#262626"/></svg>
<div style="left:564px;top:738px;width:178px;height:40px;background:#272727;border-radius:3.5px;"></div>
<div style="left:617px;top:738px;width:8px;height:40px;background:#3a3a3a;"></div>
<div style="left:744px;top:606px;width:62px;height:50px;background:#1b1a19;border-radius:3.5px;"></div>
<div style="left:744px;top:658px;width:62px;height:36px;background:#4c8d77;border-radius:3.5px;"></div>
<span style="top:658px;height:36px;line-height:36px;font-size:20px;color:#fff;white-space:nowrap;left:375px;width:800px;text-align:center;">T</span>
<div style="left:744px;top:696px;width:62px;height:40px;background:#3b3b3a;border-radius:3.5px;"></div>
<span style="top:696px;height:40px;line-height:40px;font-size:21.5px;color:#fff;white-space:nowrap;left:375px;width:800px;text-align:center;">Alph</span>
<div style="left:744px;top:738px;width:62px;height:40px;background:#3b3b3a;border-radius:3.5px;"></div>
<svg style="left:744px;top:741px;" width="62" height="40" viewBox="0 0 62 40"><rect x="11.5" y="12" width="3.6" height="16" fill="#fff"/><polygon points="14.5,20 24.5,12 24.5,28" fill="#fff"/><polygon points="48,20 37.5,12 37.5,28" fill="#fff"/><rect x="47.4" y="12" width="3.6" height="16" fill="#fff"/></svg>
<div style="left:812px;top:606px;width:3.5px;height:172px;background:#9b5a7f;"></div>
<div style="left:824px;top:606px;width:176px;height:132px;background:#1b1a19;"></div>
<svg style="left:824px;top:606px;overflow:hidden;" width="176" height="132" viewBox="0 0 176 132"><polygon points="54.9,18.5 118.1,36.7 113.7,55.5 91.2,48.6 74.3,108.1 53.6,101.2 70.5,42.3 50.1,36.1" fill="#83fcd1"/><path d="M121.3 61.8 L135.7 68 L130.7 116.2 L119.4 110.6 L119.6 98.7 L103.7 92.4 L96.2 98.1 L87.4 92.4 Z M121.3 78 L113.1 84.3 L120.6 88.1 Z" fill="#3b5347" fill-rule="evenodd"/></svg>
<div style="left:824px;top:738px;width:176px;height:40px;background:#3b3b3a;border-radius:0 0 4.5px 4.5px;"></div>
<span style="top:738px;height:40px;line-height:40px;font-size:23.4px;color:#fff;white-space:nowrap;letter-spacing:0.570px;left:833px;">Text Animator</span>
<div style="left:1004px;top:606px;width:176px;height:132px;background:#1b1a19;"></div>
<svg style="left:1004px;top:606px;overflow:hidden;" width="176" height="132" viewBox="0 0 176 132"><line x1="101.2" y1="96" x2="115.6" y2="86.6" stroke="#e020e8" stroke-width="2.2"/><rect x="139.5" y="63.5" width="3" height="4" fill="#a018a8"/></svg>
<div style="left:1004px;top:738px;width:176px;height:40px;background:#3b3b3a;border-radius:0 0 4.5px 4.5px;"></div>
<span style="top:738px;height:40px;line-height:40px;font-size:23.4px;color:#fff;white-space:nowrap;transform-origin:0 50%;transform:scaleX(0.769977);left:1013px;">cloners 2020-04...</span>
<div style="left:1184px;top:606px;width:176px;height:132px;background:#1b1a19;"></div>
<svg style="left:1184px;top:606px;overflow:hidden;" width="176" height="132" viewBox="0 0 176 132"><rect width="176" height="132" fill="#f225fa"/><line x1="-29.6" y1="-10" x2="-189.6" y2="150" stroke="#1b1a19" stroke-width="9.9"/><line x1="7.7" y1="-10" x2="-152.3" y2="150" stroke="#1b1a19" stroke-width="9.9"/><line x1="45" y1="-10" x2="-115" y2="150" stroke="#1b1a19" stroke-width="9.9"/><line x1="82.3" y1="-10" x2="-77.7" y2="150" stroke="#1b1a19" stroke-width="9.9"/><line x1="119.6" y1="-10" x2="-40.4" y2="150" stroke="#1b1a19" stroke-width="9.9"/><line x1="156.9" y1="-10" x2="-3.1" y2="150" stroke="#1b1a19" stroke-width="9.9"/><line x1="194.2" y1="-10" x2="34.2" y2="150" stroke="#1b1a19" stroke-width="9.9"/><line x1="231.5" y1="-10" x2="71.5" y2="150" stroke="#1b1a19" stroke-width="9.9"/><line x1="268.8" y1="-10" x2="108.8" y2="150" stroke="#1b1a19" stroke-width="9.9"/><line x1="306.1" y1="-10" x2="146.1" y2="150" stroke="#1b1a19" stroke-width="9.9"/><line x1="343.4" y1="-10" x2="183.4" y2="150" stroke="#1b1a19" stroke-width="9.9"/></svg>
<div style="left:1184px;top:738px;width:176px;height:40px;background:#3b3b3a;border-radius:0 0 4.5px 4.5px;"></div>
<span style="top:738px;height:40px;line-height:40px;font-size:23.4px;color:#fff;white-space:nowrap;letter-spacing:-0.169px;left:1193px;">Lines</span>
<div style="left:1184px;top:606px;width:176px;height:132px;border:4px solid #83fcd1;border-bottom-width:4px;"></div>
<div style="left:1364px;top:606px;width:176px;height:132px;background:#1b1a19;"></div>
<svg style="left:1364px;top:606px;overflow:hidden;" width="176" height="132" viewBox="0 0 176 132"><defs><filter id="c1b" x="-20%" y="-20%" width="140%" height="140%"><feGaussianBlur stdDeviation="1"/></filter></defs><rect x="30" y="34" width="116" height="64" fill="#000"/><g fill="none" filter="url(#c1b)"><path d="M88 34 L119.5 66 L88 98 L56.5 66 Z" stroke="#173536" stroke-width="3"/><path d="M88 39 L114 66 L88 93 L62 66 Z" stroke="#1f4a4e" stroke-width="3"/><path d="M88 45 L108 66 L88 87 L68 66 Z" stroke="#27457a" stroke-width="3.5"/><path d="M88 51 L102 66 L88 81 L74 66 Z" stroke="#1a2a58" stroke-width="3"/><path d="M88 56 L97 66 L88 76 L79 66 Z" stroke="#0e1630" stroke-width="3"/><path d="M72 30 L88 46 L104 30" stroke="#5a3f9a" stroke-width="3"/><path d="M78 30 L88 40 L98 30" stroke="#8a5ac8" stroke-width="2"/><path d="M74 104 L88 90 L102 104" stroke="#1c3a40" stroke-width="3"/></g><rect x="0" y="0" width="176" height="34" fill="#1b1a19"/><rect x="0" y="98" width="176" height="34" fill="#1b1a19"/><rect x="0" y="34" width="30" height="64" fill="#1b1a19"/><rect x="146" y="34" width="30" height="64" fill="#1b1a19"/></svg>
<div style="left:1364px;top:738px;width:176px;height:40px;background:#3b3b3a;border-radius:0 0 4.5px 4.5px;"></div>
<span style="top:738px;height:40px;line-height:40px;font-size:23.4px;color:#fff;white-space:nowrap;transform-origin:0 50%;transform:scaleX(0.769977);left:1373px;">cloners 2020-03...</span>
<div style="left:1544px;top:606px;width:176px;height:132px;background:#1b1a19;"></div>
<svg style="left:1544px;top:606px;overflow:hidden;" width="176" height="132" viewBox="0 0 176 132"><defs><radialGradient id="c2a" cx="76" cy="40" r="70" gradientUnits="userSpaceOnUse"><stop offset="0" stop-color="#3a9a90"/><stop offset="0.35" stop-color="#1c4f4a"/><stop offset="1" stop-color="#0a2120"/></radialGradient><radialGradient id="c2b" cx="0.5" cy="0.5" r="0.5"><stop offset="0" stop-color="#fff"/><stop offset="0.45" stop-color="#cff" stop-opacity="0.85"/><stop offset="1" stop-color="#5cc" stop-opacity="0"/></radialGradient><filter id="c2f" x="-20%" y="-20%" width="140%" height="140%"><feGaussianBlur stdDeviation="0.9"/></filter></defs><rect x="30" y="34" width="116" height="64" fill="url(#c2a)"/><g fill="none" filter="url(#c2f)"><path d="M88 35 L119 66 L88 97 L57 66 Z" stroke="#efe4f6" stroke-width="5"/><path d="M88 42 L112 66 L88 90 L64 66 Z" stroke="#e39ae8" stroke-width="4"/><path d="M88 48 L106 66 L88 84 L70 66 Z" stroke="#c9b8ee" stroke-width="3"/><path d="M88 53 L101 66 L88 79 L75 66 Z" stroke="#5a4cc0" stroke-width="4"/><path d="M70 104 L88 86 L106 104" stroke="#ecd0f0" stroke-width="6"/><path d="M74 28 L88 42 L102 28" stroke="#f4eaf8" stroke-width="6"/><path d="M66 104 L80 90 M110 104 L96 90" stroke="#b060c8" stroke-width="3"/></g><circle cx="76" cy="40" r="15" fill="url(#c2b)"/><rect x="0" y="0" width="176" height="34" fill="#1b1a19"/><rect x="0" y="98" width="176" height="34" fill="#1b1a19"/><rect x="0" y="34" width="30" height="64" fill="#1b1a19"/><rect x="146" y="34" width="30" height="64" fill="#1b1a19"/></svg>
<div style="left:1544px;top:738px;width:176px;height:40px;background:#3b3b3a;border-radius:0 0 4.5px 4.5px;"></div>
<span style="top:738px;height:40px;line-height:40px;font-size:23.4px;color:#fff;white-space:nowrap;transform-origin:0 50%;transform:scaleX(0.769977);left:1553px;">cloners 2020-03...</span>
<div style="left:1724px;top:606px;width:176px;height:132px;background:#1b1a19;"></div>
<svg style="left:1724px;top:606px;overflow:hidden;" width="176" height="132" viewBox="0 0 176 132"><defs><filter id="xb" x="-20%" y="-20%" width="140%" height="140%"><feGaussianBlur stdDeviation="0.5"/></filter></defs><rect x="0" y="17" width="176" height="99" fill="#000"/><g fill="none" stroke-linejoin="miter" filter="url(#xb)"><path d="M47.5 14 L98.8 66 L47.5 118 M128.6 14 L77.3 66 L128.6 118" stroke="#2a0b45" stroke-width="3.5"/><path d="M50.5 16 L101.8 66 L50.5 116 M125.6 16 L74.3 66 L125.6 116" stroke="#7d519c" stroke-width="2.2"/></g><rect x="0" y="0" width="176" height="17" fill="#1b1a19"/><rect x="0" y="116" width="176" height="16" fill="#1b1a19"/></svg>
<div style="left:1724px;top:738px;width:176px;height:40px;background:#3b3b3a;border-radius:0 0 4.5px 4.5px;"></div>
<span style="top:738px;height:40px;line-height:40px;font-size:23.4px;color:#fff;white-space:nowrap;transform-origin:0 50%;transform:scaleX(0.907067);left:1733px;">0eu9piwkk3s-_1</span>
<div style="left:1904px;top:606px;width:176px;height:132px;background:#1b1a19;"></div>
<div style="left:1904px;top:738px;width:176px;height:40px;background:#3b3b3a;border-radius:0 0 4.5px 4.5px;"></div>
<div style="left:2084px;top:606px;width:176px;height:132px;background:#1b1a19;"></div>
<div style="left:2084px;top:738px;width:176px;height:40px;background:#3b3b3a;border-radius:0 0 4.5px 4.5px;"></div>
<div style="left:824px;top:10px;width:176px;height:40px;background:#83fcd1;border-radius:0 0 4.5px 4.5px;"></div>
<span style="top:10px;height:40px;line-height:40px;font-size:23.4px;color:#000;white-space:nowrap;letter-spacing:0.349px;left:512px;width:800px;text-align:center;text-indent:0.349px;">Column 1</span>
<div style="left:1004px;top:10px;width:176px;height:40px;background:#3b3b3a;border-radius:0 0 4.5px 4.5px;"></div>
<span style="top:10px;height:40px;line-height:40px;font-size:23.4px;color:#fff;white-space:nowrap;letter-spacing:0.349px;left:692px;width:800px;text-align:center;text-indent:0.349px;">Column 2</span>
<div style="left:1184px;top:10px;width:176px;height:40px;background:#3b3b3a;border-radius:0 0 4.5px 4.5px;"></div>
<span style="top:10px;height:40px;line-height:40px;font-size:23.4px;color:#fff;white-space:nowrap;letter-spacing:0.349px;left:872px;width:800px;text-align:center;text-indent:0.349px;">Column 3</span>
<div style="left:1364px;top:10px;width:176px;height:40px;background:#3b3b3a;border-radius:0 0 4.5px 4.5px;"></div>
<span style="top:10px;height:40px;line-height:40px;font-size:23.4px;color:#fff;white-space:nowrap;letter-spacing:0.349px;left:1052px;width:800px;text-align:center;text-indent:0.349px;">Column 4</span>
<div style="left:1544px;top:10px;width:176px;height:40px;background:#3b3b3a;border-radius:0 0 4.5px 4.5px;"></div>
<span style="top:10px;height:40px;line-height:40px;font-size:23.4px;color:#fff;white-space:nowrap;letter-spacing:0.349px;left:1232px;width:800px;text-align:center;text-indent:0.349px;">Column 5</span>
<div style="left:1724px;top:10px;width:176px;height:40px;background:#3b3b3a;border-radius:0 0 4.5px 4.5px;"></div>
<span style="top:10px;height:40px;line-height:40px;font-size:23.4px;color:#fff;white-space:nowrap;letter-spacing:0.349px;left:1412px;width:800px;text-align:center;text-indent:0.349px;">Column 6</span>
<div style="left:1904px;top:10px;width:176px;height:40px;background:#3b3b3a;border-radius:0 0 4.5px 4.5px;"></div>
<span style="top:10px;height:40px;line-height:40px;font-size:23.4px;color:#fff;white-space:nowrap;letter-spacing:0.349px;left:1592px;width:800px;text-align:center;text-indent:0.349px;">Column 7</span>
<div style="left:2084px;top:10px;width:176px;height:40px;background:#3b3b3a;border-radius:0 0 4.5px 4.5px;"></div>
<span style="top:10px;height:40px;line-height:40px;font-size:23.4px;color:#fff;white-space:nowrap;letter-spacing:0.349px;left:1772px;width:800px;text-align:center;text-indent:0.349px;">Column 8</span>
<div style="left:0px;top:794px;width:740px;height:40px;background:#090909;border-radius:4.5px;"></div>
<div style="left:0px;top:794px;width:38px;height:40px;background:#3b3b3a;border-radius:5.5px 0 0 5.5px;"></div>
<span style="top:794px;height:40px;line-height:40px;font-size:22px;color:#fff;white-space:nowrap;left:-380px;width:800px;text-align:center;">A</span>
<div style="left:358px;top:794px;width:24px;height:40px;background:#4c8d77;"></div>
<div style="left:702px;top:794px;width:38px;height:40px;background:#3b3b3a;border-radius:0 4.5px 4.5px 0;"></div>
<span style="top:794px;height:40px;line-height:40px;font-size:20px;color:#fff;white-space:nowrap;left:319px;width:800px;text-align:center;">B</span>
<div style="left:742px;top:794px;width:64px;height:40px;background:#3b3b3a;border-radius:4.5px;"></div>
<svg style="left:744px;top:797px;" width="62" height="40" viewBox="0 0 62 40"><rect x="11.5" y="12" width="3.6" height="16" fill="#fff"/><polygon points="14.5,20 24.5,12 24.5,28" fill="#fff"/><polygon points="48,20 37.5,12 37.5,28" fill="#fff"/><rect x="47.4" y="12" width="3.6" height="16" fill="#fff"/></svg>
<div style="left:824px;top:794px;width:238px;height:40px;background:#83fcd1;border-radius:0 0 4.5px 4.5px;"></div>
<span style="top:794px;height:40px;line-height:40px;font-size:23.4px;color:#000;white-space:nowrap;letter-spacing:0.647px;left:543px;width:800px;text-align:center;text-indent:0.647px;">Text Animator</span>
<div style="left:1064px;top:794px;width:140px;height:40px;background:#3b3b3a;border-radius:0 0 4.5px 4.5px;"></div>
<span style="top:794px;height:40px;line-height:40px;font-size:23.4px;color:#fff;white-space:nowrap;letter-spacing:-0.107px;left:734px;width:800px;text-align:center;text-indent:-0.107px;">empty</span>
<div style="left:1206px;top:794px;width:140px;height:40px;background:#3b3b3a;border-radius:0 0 4.5px 4.5px;"></div>
<span style="top:794px;height:40px;line-height:40px;font-size:23.4px;color:#fff;white-space:nowrap;letter-spacing:-0.107px;left:876px;width:800px;text-align:center;text-indent:-0.107px;">empty</span>
<div style="left:0px;top:840px;width:74px;height:72px;background:#2c2c2c;"></div>
<div style="left:76px;top:840px;width:196px;height:72px;background:#2c2c2c;"></div>
<div style="left:274px;top:840px;width:72px;height:72px;background:#2c2c2c;"></div>
<span style="top:841px;height:72px;line-height:72px;font-size:24px;color:#fff;white-space:nowrap;left:-90px;width:800px;text-align:center;">–</span>
<div style="left:348px;top:840px;width:72px;height:72px;background:#2c2c2c;"></div>
<span style="top:841px;height:72px;line-height:72px;font-size:24px;color:#fff;white-space:nowrap;left:-16px;width:800px;text-align:center;">+</span>
<div style="left:422px;top:840px;width:72px;height:72px;background:#2c2c2c;"></div>
<span style="top:841px;height:72px;line-height:72px;font-size:24px;color:#fff;white-space:nowrap;left:58px;width:800px;text-align:center;">–|</span>
<div style="left:496px;top:840px;width:72px;height:72px;background:#2c2c2c;"></div>
<span style="top:841px;height:72px;line-height:72px;font-size:24px;color:#fff;white-space:nowrap;left:132px;width:800px;text-align:center;">|+</span>
<div style="left:570px;top:840px;width:72px;height:72px;background:#2c2c2c;"></div>
<span style="top:841px;height:72px;line-height:72px;font-size:24px;color:#fff;white-space:nowrap;left:206px;width:800px;text-align:center;">/2</span>
<div style="left:644px;top:840px;width:72px;height:72px;background:#2c2c2c;"></div>
<span style="top:841px;height:72px;line-height:72px;font-size:24px;color:#fff;white-space:nowrap;left:280px;width:800px;text-align:center;">*2</span>
<div style="left:718px;top:840px;width:104px;height:72px;background:#2c2c2c;"></div>
<span style="top:841px;height:72px;line-height:72px;font-size:24px;color:#fff;white-space:nowrap;left:370px;width:800px;text-align:center;">TAP</span>
<div style="left:824px;top:840px;width:151px;height:72px;background:#2c2c2c;"></div>
<span style="top:841px;height:72px;line-height:72px;font-size:24px;color:#fff;white-space:nowrap;left:499.5px;width:800px;text-align:center;">RESYNC</span>
<div style="left:976px;top:840px;width:144px;height:72px;background:#2c2c2c;"></div>
<span style="top:841px;height:72px;line-height:72px;font-size:24px;color:#fff;white-space:nowrap;left:648px;width:800px;text-align:center;">PAUSE</span>
<div style="left:1122px;top:840px;width:72px;height:72px;background:#2c2c2c;"></div>
<div style="left:1196px;top:840px;width:70px;height:72px;background:#2c2c2c;"></div>
<div style="left:1268px;top:840px;width:70px;height:72px;background:#2c2c2c;"></div>
<div style="left:1340px;top:840px;width:830px;height:72px;background:#2c2c2c;"></div>
<div style="left:18px;top:858px;width:38px;height:36px;background:#4c8d77;"></div>
<div style="left:18px;top:876px;width:18px;height:18px;background:#83fcd1;"></div>
<span style="top:841px;height:72px;line-height:72px;font-size:24px;color:#fff;white-space:nowrap;letter-spacing:-0.155px;left:100px;">BPM</span>
<span style="top:841px;height:72px;line-height:72px;font-size:24px;color:#fff;white-space:nowrap;letter-spacing:0.264px;left:166px;">120</span>
<svg style="left:1122px;top:840px;" width="72" height="72" viewBox="0 0 72 72"><path d="M32.3 22.6 H37.6 L45.6 48.2 H24 Z" fill="none" stroke="#fff" stroke-width="2.6" stroke-linejoin="round"/><polygon points="25.2,40.7 44.4,40.7 47.1,49.5 22.4,49.5" fill="#fff"/><rect x="26" y="49" width="3.2" height="3" fill="#fff"/><rect x="40.3" y="49" width="3.2" height="3" fill="#fff"/><line x1="36.8" y1="40.7" x2="46" y2="29.3" stroke="#fff" stroke-width="2.4"/><circle cx="46.3" cy="29" r="3.3" fill="#fff"/></svg>
<svg style="left:1196px;top:840px;" width="70" height="72" viewBox="0 0 70 72"><path d="M30.4 29.4 A9.6 9.6 0 1 1 40.6 45.2" fill="none" stroke="#fff" stroke-width="6.4" stroke-linecap="round"/><polygon points="21.5,22.3 21.5,36 35.2,36" fill="#fff"/></svg>
<svg style="left:1269.5px;top:840px;" width="70" height="72" viewBox="0 0 70 72"><g transform="translate(70,0) scale(-1,1)"><path d="M30.4 29.4 A9.6 9.6 0 1 1 40.6 45.2" fill="none" stroke="#1b1a19" stroke-width="6.4" stroke-linecap="round"/><polygon points="21.5,22.3 21.5,36 35.2,36" fill="#1b1a19"/></g></svg>
<div style="left:0px;top:918px;width:756px;height:42px;background:#2c2c2c;border-radius:6px 6px 0 0;"></div>
<span style="top:918px;height:42px;line-height:42px;font-size:23.4px;color:#d4d4d4;white-space:nowrap;letter-spacing:0.084px;left:-24.5px;width:800px;text-align:center;text-indent:0.084px;">Output Monitor</span>
<div style="left:0px;top:960px;width:756px;height:1298px;background:#0c0c0c;"></div>
<div style="left:0px;top:960px;width:756px;height:40px;background:#0a0a0a;"></div>
<span style="top:960px;height:40px;line-height:40px;font-size:23.4px;color:#fff;white-space:nowrap;letter-spacing:0.370px;left:18px;">Output Monitor</span>
<svg style="left:714.8px;top:967.3px;" width="26.4" height="26.4" viewBox="0 0 26.4 26.4"><path d="M25.25,11.29 L25.25,15.11 L22.33,15.39 L21.21,18.11 L23.07,20.37 L20.37,23.07 L18.11,21.21 L15.39,22.33 L15.11,25.25 L11.29,25.25 L11.01,22.33 L8.29,21.21 L6.03,23.07 L3.33,20.37 L5.19,18.11 L4.07,15.39 L1.15,15.11 L1.15,11.29 L4.07,11.01 L5.19,8.29 L3.33,6.03 L6.03,3.33 L8.29,5.19 L11.01,4.07 L11.29,1.15 L15.11,1.15 L15.39,4.07 L18.11,5.19 L20.37,3.33 L23.07,6.03 L21.21,8.29 L22.33,11.01 Z M13.20 8.44 a4.76 4.76 0 1 0 0.01 0 Z" fill="#c6c6c6" fill-rule="evenodd"/></svg>
<div style="left:4px;top:1000px;width:748px;height:421px;background:#000;"></div>
<svg style="left:4px;top:1000px;" width="748" height="421" viewBox="0 0 748 421"><g fill="none" stroke="#a400b4" stroke-width="1.2"><path d="M262 89 L237 132"/><path d="M307 110 L311 103 L317.5 106.5"/><path d="M280 168 L276 177 L232 200.5 L226.5 193"/><path d="M394.5 270 L388.5 282.5"/><path d="M377 302.5 L360 335.5 L401 335.5" stroke="#8a0098"/><path d="M500 305 L522 328"/></g></svg>
<div style="left:4px;top:1421px;width:748px;height:43px;background:#1c1b1a;"></div>
<span style="top:1419px;height:42px;line-height:42px;font-size:24px;color:#d0d0d0;white-space:nowrap;letter-spacing:0.524px;font-family:'DejaVu Sans Light','DejaVu Sans','Liberation Sans',sans-serif;font-stretch:normal;font-weight:200;-webkit-text-stroke:0.15px currentColor;left:21px;">Preview Monitor / Layer / Layer 4</span>
<div style="left:4px;top:1464px;width:748px;height:422px;background:#000;"></div>
<span style="top:1470px;height:30px;line-height:30px;font-size:19px;color:#d0d0d0;white-space:nowrap;letter-spacing:0.791px;font-family:'DejaVu Sans Light','DejaVu Sans','Liberation Sans',sans-serif;font-stretch:normal;font-weight:200;-webkit-text-stroke:0.15px currentColor;left:11px;">FPS 53.98</span>
<svg style="left:4px;top:1464px;" width="748" height="422" viewBox="0 0 748 422"><g fill="none" stroke="#d8d8d8" stroke-width="0.9"><path d="M284 53 L208.5 183 L222 186 L232 201 L276 178 L310 104 L345.5 127"/><path d="M345.5 127 L348 203.5" stroke-dasharray="9 5"/><path d="M351 205 L399 104 L298 54"/><path d="M440 221 L513 79.5 L609 219"/><path d="M553 221 L609 219" stroke-dasharray="10 8"/><path d="M360 336 L422 225 L529 336"/></g></svg>
<div style="left:4px;top:1886px;width:748px;height:372px;background:#171716;"></div>
<div style="left:762px;top:918px;width:386px;height:42px;background:#2c2c2c;border-radius:6px 6px 0 0;"></div>
<span style="top:918px;height:42px;line-height:42px;font-size:23.4px;color:#d4d4d4;white-space:nowrap;letter-spacing:-0.737px;left:553px;width:800px;text-align:center;text-indent:-0.737px;">Layer</span>
<div style="left:1150px;top:918px;width:386px;height:42px;background:#0b0b0b;border-radius:6px 6px 0 0;"></div>
<span style="top:918px;height:42px;line-height:42px;font-size:23.4px;color:#d4d4d4;white-space:nowrap;letter-spacing:0.048px;left:941px;width:800px;text-align:center;text-indent:0.048px;">Composition</span>
<div style="left:762px;top:962px;width:774px;height:1300px;background:#000;"></div>
<div style="left:762px;top:2186px;width:774px;height:76px;background:#0d0d0d;"></div>
<div style="left:762px;top:962px;width:774px;height:70px;background:#171614;"></div>
<div style="left:778px;top:980px;width:246px;height:36px;border:2px solid #4e4e4e;background:#080808;"></div>
<span style="top:980px;height:36px;line-height:36px;font-size:23.4px;color:#fff;white-space:nowrap;letter-spacing:-0.394px;left:788px;">Layer 4</span>
<svg style="left:1478.8px;top:985.3px;" width="26.4" height="26.4" viewBox="0 0 26.4 26.4"><path d="M25.25,11.29 L25.25,15.11 L22.33,15.39 L21.21,18.11 L23.07,20.37 L20.37,23.07 L18.11,21.21 L15.39,22.33 L15.11,25.25 L11.29,25.25 L11.01,22.33 L8.29,21.21 L6.03,23.07 L3.33,20.37 L5.19,18.11 L4.07,15.39 L1.15,15.11 L1.15,11.29 L4.07,11.01 L5.19,8.29 L3.33,6.03 L6.03,3.33 L8.29,5.19 L11.01,4.07 L11.29,1.15 L15.11,1.15 L15.39,4.07 L18.11,5.19 L20.37,3.33 L23.07,6.03 L21.21,8.29 L22.33,11.01 Z M13.20 8.44 a4.76 4.76 0 1 0 0.01 0 Z" fill="#c6c6c6" fill-rule="evenodd"/></svg>
<div style="left:762px;top:1034px;width:774px;height:46px;background:#2c2c2c;"></div>
<svg style="left:776px;top:1050px;" width="18" height="14" viewBox="0 0 18 14"><polygon points="1,1 17,1 9,13" fill="#8c8c8c"/></svg>
<span style="top:1033px;height:46px;line-height:46px;font-size:23.4px;color:#fff;white-space:nowrap;letter-spacing:0.283px;left:805px;">Monitor</span>
<div style="left:762px;top:1082px;width:774px;height:142px;background:#171614;"></div>
<div style="left:1030px;top:1090px;width:238px;height:126px;background:#000;"></div>
<svg style="left:1030px;top:1090px;" width="238" height="126" viewBox="0 0 238 126"><g fill="none" stroke="#e0e0e0" stroke-width="1" stroke-dasharray="1.2 2.2"><path d="M88 18 L68 52 L75 60 M88 18 L96 16 L127 30 L112 60 M109 48 L108 36 L98 32 L88 52"/><path d="M144 49 L163 23 L191 62"/><path d="M115 100 L134 67"/></g><path d="M134 67 L169 100" stroke="#e8e8e8" stroke-width="1.2" fill="none"/></svg>
<div style="left:762px;top:1226px;width:774px;height:46px;background:#2c2c2c;"></div>
<svg style="left:778px;top:1240px;" width="14" height="18" viewBox="0 0 14 18"><polygon points="1,1 13,9 1,17" fill="#8c8c8c"/></svg>
<span style="top:1225px;height:46px;line-height:46px;font-size:23.4px;color:#fff;white-space:nowrap;letter-spacing:0.091px;left:805px;">Dashboard</span>
<div style="left:762px;top:1274px;width:774px;height:46px;background:#2c2c2c;"></div>
<svg style="left:778px;top:1288px;" width="14" height="18" viewBox="0 0 14 18"><polygon points="1,1 13,9 1,17" fill="#8c8c8c"/></svg>
<span style="top:1273px;height:46px;line-height:46px;font-size:23.4px;color:#fff;white-space:nowrap;letter-spacing:0.326px;left:805px;">Autopilot</span>
<div style="left:762px;top:1322px;width:774px;height:46px;background:#2c2c2c;"></div>
<svg style="left:776px;top:1338px;" width="18" height="14" viewBox="0 0 18 14"><polygon points="1,1 17,1 9,13" fill="#8c8c8c"/></svg>
<span style="top:1321px;height:46px;line-height:46px;font-size:23.4px;color:#fff;white-space:nowrap;letter-spacing:-0.537px;left:805px;">Layer</span>
<div style="left:762px;top:1370px;width:172px;height:46px;background:#171614;"></div>
<div style="left:936px;top:1370px;width:600px;height:46px;background:#171614;"></div>
<span style="top:1369px;height:46px;line-height:46px;font-size:23.4px;color:#fff;white-space:nowrap;letter-spacing:0.018px;right:1249px;text-align:right;margin-right:-0.018px;">Master</span>
<span style="top:1369px;height:46px;line-height:46px;font-size:23.4px;color:#fff;white-space:nowrap;letter-spacing:-0.974px;left:948px;">100 %</span>
<div style="left:1048px;top:1376px;width:474px;height:34px;background:#272727;"></div>
<div style="left:1514px;top:1376px;width:8px;height:34px;background:#4c8d77;"></div>
<div style="left:762px;top:1418px;width:774px;height:46px;background:#2c2c2c;"></div>
<svg style="left:778px;top:1432px;" width="14" height="18" viewBox="0 0 14 18"><polygon points="1,1 13,9 1,17" fill="#8c8c8c"/></svg>
<span style="top:1417px;height:46px;line-height:46px;font-size:23.4px;color:#fff;white-space:nowrap;letter-spacing:0.432px;left:805px;">Audio</span>
<div style="left:762px;top:1466px;width:774px;height:46px;background:#2c2c2c;"></div>
<svg style="left:776px;top:1482px;" width="18" height="14" viewBox="0 0 18 14"><polygon points="1,1 17,1 9,13" fill="#8c8c8c"/></svg>
<span style="top:1465px;height:46px;line-height:46px;font-size:23.4px;color:#fff;white-space:nowrap;letter-spacing:0.213px;left:805px;">Video</span>
<div style="left:762px;top:1514px;width:172px;height:46px;background:#171614;"></div>
<div style="left:936px;top:1514px;width:600px;height:46px;background:#171614;"></div>
<span style="top:1513px;height:46px;line-height:46px;font-size:23.4px;color:#fff;white-space:nowrap;letter-spacing:-0.052px;right:1249px;text-align:right;margin-right:0.052px;">Blend Mode</span>
<span style="top:1513px;height:46px;line-height:46px;font-size:23.4px;color:#fff;white-space:nowrap;letter-spacing:0.228px;left:948px;">Alpha</span>
<svg style="left:1058px;top:1532px;" width="16" height="9" viewBox="0 0 16 9"><polygon points="0,0 16,0 8,8.5" fill="#fff"/></svg>
<div style="left:762px;top:1562px;width:172px;height:46px;background:#171614;"></div>
<div style="left:936px;top:1562px;width:600px;height:46px;background:#171614;"></div>
<span style="top:1561px;height:46px;line-height:46px;font-size:23.4px;color:#fff;white-space:nowrap;letter-spacing:0.006px;right:1249px;text-align:right;margin-right:-0.006px;">Opacity</span>
<span style="top:1561px;height:46px;line-height:46px;font-size:23.4px;color:#fff;white-space:nowrap;letter-spacing:-0.974px;left:948px;">100 %</span>
<div style="left:1048px;top:1568px;width:474px;height:34px;background:#272727;"></div>
<div style="left:1514px;top:1568px;width:8px;height:34px;background:#4c8d77;"></div>
<div style="left:762px;top:1610px;width:172px;height:46px;background:#171614;"></div>
<div style="left:936px;top:1610px;width:600px;height:46px;background:#171614;"></div>
<span style="top:1609px;height:46px;line-height:46px;font-size:23.4px;color:#fff;white-space:nowrap;letter-spacing:-0.023px;right:1249px;text-align:right;margin-right:0.023px;">Width</span>
<span style="top:1609px;height:46px;line-height:46px;font-size:23.4px;color:#fff;white-space:nowrap;letter-spacing:-0.143px;left:948px;">1920</span>
<span style="top:1611px;height:46px;line-height:46px;font-size:22px;color:#fff;white-space:nowrap;left:670px;width:800px;text-align:center;">–</span>
<span style="top:1611px;height:46px;line-height:46px;font-size:24px;color:#fff;white-space:nowrap;left:714px;width:800px;text-align:center;">+</span>
<div style="left:762px;top:1658px;width:172px;height:46px;background:#171614;"></div>
<div style="left:936px;top:1658px;width:600px;height:46px;background:#171614;"></div>
<span style="top:1657px;height:46px;line-height:46px;font-size:23.4px;color:#fff;white-space:nowrap;letter-spacing:0.066px;right:1249px;text-align:right;margin-right:-0.066px;">Height</span>
<span style="top:1657px;height:46px;line-height:46px;font-size:23.4px;color:#fff;white-space:nowrap;letter-spacing:-0.143px;left:948px;">1080</span>
<span style="top:1659px;height:46px;line-height:46px;font-size:22px;color:#fff;white-space:nowrap;left:670px;width:800px;text-align:center;">–</span>
<span style="top:1659px;height:46px;line-height:46px;font-size:24px;color:#fff;white-space:nowrap;left:714px;width:800px;text-align:center;">+</span>
<div style="left:762px;top:1706px;width:172px;height:46px;background:#171614;"></div>
<div style="left:936px;top:1706px;width:600px;height:46px;background:#171614;"></div>
<span style="top:1705px;height:46px;line-height:46px;font-size:23.4px;color:#fff;white-space:nowrap;letter-spacing:0.136px;right:1249px;text-align:right;margin-right:-0.136px;">Auto Size</span>
<span style="top:1705px;height:46px;line-height:46px;font-size:23.4px;color:#fff;white-space:nowrap;letter-spacing:0.644px;left:948px;">Off</span>
<svg style="left:1058px;top:1724px;" width="16" height="9" viewBox="0 0 16 9"><polygon points="0,0 16,0 8,8.5" fill="#fff"/></svg>
<div style="left:762px;top:1754px;width:774px;height:46px;background:#2c2c2c;"></div>
<svg style="left:776px;top:1770px;" width="18" height="14" viewBox="0 0 18 14"><polygon points="1,1 17,1 9,13" fill="#8c8c8c"/></svg>
<span style="top:1753px;height:46px;line-height:46px;font-size:23.4px;color:#fff;white-space:nowrap;letter-spacing:0.555px;left:805px;">Transition</span>
<div style="left:762px;top:1802px;width:172px;height:46px;background:#171614;"></div>
<div style="left:936px;top:1802px;width:600px;height:46px;background:#171614;"></div>
<span style="top:1801px;height:46px;line-height:46px;font-size:23.4px;color:#fff;white-space:nowrap;letter-spacing:-0.052px;right:1249px;text-align:right;margin-right:0.052px;">Blend Mode</span>
<span style="top:1801px;height:46px;line-height:46px;font-size:23.4px;color:#fff;white-space:nowrap;letter-spacing:0.228px;left:948px;">Alpha</span>
<svg style="left:1058px;top:1820px;" width="16" height="9" viewBox="0 0 16 9"><polygon points="0,0 16,0 8,8.5" fill="#fff"/></svg>
<div style="left:762px;top:1850px;width:172px;height:46px;background:#171614;"></div>
<div style="left:936px;top:1850px;width:600px;height:46px;background:#171614;"></div>
<span style="top:1849px;height:46px;line-height:46px;font-size:23.4px;color:#fff;white-space:nowrap;letter-spacing:0.071px;right:1249px;text-align:right;margin-right:-0.071px;">Duration</span>
<span style="top:1849px;height:46px;line-height:46px;font-size:23.4px;color:#fff;white-space:nowrap;left:948px;">0</span>
<span style="top:1851px;height:46px;line-height:46px;font-size:22px;color:#fff;white-space:nowrap;left:670px;width:800px;text-align:center;">–</span>
<span style="top:1851px;height:46px;line-height:46px;font-size:24px;color:#fff;white-space:nowrap;left:714px;width:800px;text-align:center;">+</span>
<div style="left:762px;top:1898px;width:726px;height:46px;background:#2b5446;"></div>
<svg style="left:776px;top:1914px;" width="18" height="14" viewBox="0 0 18 14"><polygon points="1,1 17,1 9,13" fill="#8f9a96"/></svg>
<span style="top:1897px;height:46px;line-height:46px;font-size:23.4px;color:#fff;white-space:nowrap;letter-spacing:0.632px;left:805px;">Transform</span>
<div style="left:1490px;top:1898px;width:46px;height:46px;background:#2b5446;"></div>
<span style="top:1898px;height:46px;line-height:46px;font-size:23.4px;color:#fff;white-space:nowrap;left:1111px;width:800px;text-align:center;">P</span>
<svg style="left:1515.5px;top:1926px;" width="6" height="5" viewBox="0 0 6 5"><polygon points="0,0 6,0 3,4.5" fill="#fff"/></svg>
<div style="left:762px;top:1946px;width:172px;height:46px;background:#171614;"></div>
<div style="left:936px;top:1946px;width:600px;height:46px;background:#171614;"></div>
<span style="top:1945px;height:46px;line-height:46px;font-size:23.4px;color:#fff;white-space:nowrap;letter-spacing:0.202px;right:1249px;text-align:right;margin-right:-0.202px;">Position X</span>
<span style="top:1945px;height:46px;line-height:46px;font-size:23.4px;color:#fff;white-space:nowrap;left:948px;">0</span>
<span style="top:1947px;height:46px;line-height:46px;font-size:22px;color:#fff;white-space:nowrap;left:670px;width:800px;text-align:center;">–</span>
<span style="top:1947px;height:46px;line-height:46px;font-size:24px;color:#fff;white-space:nowrap;left:714px;width:800px;text-align:center;">+</span>
<div style="left:762px;top:1994px;width:172px;height:46px;background:#171614;"></div>
<div style="left:936px;top:1994px;width:600px;height:46px;background:#171614;"></div>
<span style="top:1993px;height:46px;line-height:46px;font-size:23.4px;color:#fff;white-space:nowrap;letter-spacing:0.358px;right:1249px;text-align:right;margin-right:-0.358px;">Position Y</span>
<span style="top:1993px;height:46px;line-height:46px;font-size:23.4px;color:#fff;white-space:nowrap;left:948px;">0</span>
<span style="top:1995px;height:46px;line-height:46px;font-size:22px;color:#fff;white-space:nowrap;left:670px;width:800px;text-align:center;">–</span>
<span style="top:1995px;height:46px;line-height:46px;font-size:24px;color:#fff;white-space:nowrap;left:714px;width:800px;text-align:center;">+</span>
<div style="left:762px;top:2042px;width:172px;height:46px;background:#171614;"></div>
<div style="left:936px;top:2042px;width:600px;height:46px;background:#171614;"></div>
<svg style="left:778px;top:2057px;" width="14" height="18" viewBox="0 0 14 18"><polygon points="1,1 13,9 1,17" fill="#8c8c8c"/></svg>
<span style="top:2041px;height:46px;line-height:46px;font-size:23.4px;color:#fff;white-space:nowrap;letter-spacing:-0.730px;left:805px;">Scale</span>
<span style="top:2041px;height:46px;line-height:46px;font-size:23.4px;color:#fff;white-space:nowrap;letter-spacing:-0.974px;left:948px;">100 %</span>
<div style="left:1048px;top:2048px;width:474px;height:34px;background:#0a0a0a;"></div>
<div style="left:1048px;top:2048px;width:46.6px;height:34px;background:#272727;"></div>
<div style="left:1094.6px;top:2048px;width:8px;height:34px;background:#4c8d77;"></div>
<div style="left:762px;top:2090px;width:172px;height:46px;background:#171614;"></div>
<div style="left:936px;top:2090px;width:600px;height:46px;background:#171614;"></div>
<svg style="left:778px;top:2105px;" width="14" height="18" viewBox="0 0 14 18"><polygon points="1,1 13,9 1,17" fill="#8c8c8c"/></svg>
<span style="top:2089px;height:46px;line-height:46px;font-size:23.4px;color:#fff;white-space:nowrap;letter-spacing:0.010px;left:805px;">Rotation</span>
<span style="top:2089px;height:46px;line-height:46px;font-size:23.4px;color:#fff;white-space:nowrap;left:948px;">0 °</span>
<div style="left:1048px;top:2096px;width:474px;height:34px;background:#0a0a0a;"></div>
<div style="left:1280.07px;top:2096px;width:8px;height:34px;background:#4c8d77;"></div>
<div style="left:762px;top:2138px;width:172px;height:46px;background:#171614;"></div>
<div style="left:936px;top:2138px;width:600px;height:46px;background:#171614;"></div>
<svg style="left:778px;top:2153px;" width="14" height="18" viewBox="0 0 14 18"><polygon points="1,1 13,9 1,17" fill="#8c8c8c"/></svg>
<span style="top:2137px;height:46px;line-height:46px;font-size:23.4px;color:#fff;white-space:nowrap;letter-spacing:0.301px;left:805px;">Anchor</span>
<span style="top:2137px;height:46px;line-height:46px;font-size:23.4px;color:#fff;white-space:nowrap;left:948px;">0</span>
<div style="left:1048px;top:2144px;width:474px;height:34px;background:#0a0a0a;"></div>
<div style="left:1280.07px;top:2144px;width:8px;height:34px;background:#4c8d77;"></div>
<span style="top:2204px;height:40px;line-height:40px;font-size:23.4px;color:#333;white-space:nowrap;letter-spacing:0.130px;left:748px;width:800px;text-align:center;text-indent:0.130px;">Drop effect or mask here.</span>
<div style="left:1542px;top:918px;width:638px;height:42px;background:#2c2c2c;border-radius:6px 0 0 0;"></div>
<span style="top:918px;height:42px;line-height:42px;font-size:23.4px;color:#d4d4d4;white-space:nowrap;letter-spacing:0.057px;left:1455px;width:800px;text-align:center;text-indent:0.057px;">Clip</span>
<div style="left:1542px;top:962px;width:628px;height:1300px;background:#000;"></div>
<div style="left:1542px;top:2234px;width:628px;height:28px;background:#0d0d0d;"></div>
<div style="left:1542px;top:962px;width:628px;height:70px;background:#0d0d0d;"></div>
<svg style="left:1542px;top:962px;" width="628" height="70" viewBox="0 0 628 70"><defs><filter id="blr" x="-20%" y="-50%" width="140%" height="200%"><feGaussianBlur stdDeviation="3.6"/></filter></defs><g filter="url(#blr)" fill="#adadad"><polygon points="186,-4 248,-4 218,15 174,16" opacity="0.8"/><polygon points="289,-4 322,-4 296,23" opacity="0.85"/><polygon points="398,-4 480,-4 517,33 372,38"/><polygon points="356.5,42 322,72 411,72"/></g></svg>
<div style="left:1558px;top:980px;width:246px;height:36px;border:2px solid #5a5a5a;background:#050505;"></div>
<span style="top:980px;height:36px;line-height:36px;font-size:23.4px;color:#fff;white-space:nowrap;letter-spacing:0.360px;left:1568px;">Slice Transform</span>
<svg style="left:2116.8px;top:985.3px;" width="26.4" height="26.4" viewBox="0 0 26.4 26.4"><path d="M25.25,11.29 L25.25,15.11 L22.33,15.39 L21.21,18.11 L23.07,20.37 L20.37,23.07 L18.11,21.21 L15.39,22.33 L15.11,25.25 L11.29,25.25 L11.01,22.33 L8.29,21.21 L6.03,23.07 L3.33,20.37 L5.19,18.11 L4.07,15.39 L1.15,15.11 L1.15,11.29 L4.07,11.01 L5.19,8.29 L3.33,6.03 L6.03,3.33 L8.29,5.19 L11.01,4.07 L11.29,1.15 L15.11,1.15 L15.39,4.07 L18.11,5.19 L20.37,3.33 L23.07,6.03 L21.21,8.29 L22.33,11.01 Z M13.20 8.44 a4.76 4.76 0 1 0 0.01 0 Z" fill="#c6c6c6" fill-rule="evenodd"/></svg>
<div style="left:1542px;top:1034px;width:628px;height:46px;background:#2c2c2c;"></div>
<svg style="left:1558px;top:1048px;" width="14" height="18" viewBox="0 0 14 18"><polygon points="1,1 13,9 1,17" fill="#8c8c8c"/></svg>
<span style="top:1033px;height:46px;line-height:46px;font-size:23.4px;color:#fff;white-space:nowrap;letter-spacing:0.283px;left:1585px;">Monitor</span>
<div style="left:1542px;top:1082px;width:628px;height:46px;background:#2c2c2c;"></div>
<svg style="left:1558px;top:1096px;" width="14" height="18" viewBox="0 0 14 18"><polygon points="1,1 13,9 1,17" fill="#8c8c8c"/></svg>
<span style="top:1081px;height:46px;line-height:46px;font-size:23.4px;color:#fff;white-space:nowrap;letter-spacing:0.091px;left:1585px;">Dashboard</span>
<div style="left:1542px;top:1130px;width:628px;height:46px;background:#2c2c2c;"></div>
<svg style="left:1558px;top:1144px;" width="14" height="18" viewBox="0 0 14 18"><polygon points="1,1 13,9 1,17" fill="#8c8c8c"/></svg>
<span style="top:1129px;height:46px;line-height:46px;font-size:23.4px;color:#fff;white-space:nowrap;letter-spacing:0.620px;left:1585px;">Transport</span>
<span style="top:1130px;height:46px;line-height:46px;font-size:23.4px;color:#fff;white-space:nowrap;transform-origin:100% 50%;transform:scaleX(0.82);right:52px;text-align:right;">BPM Sync</span>
<svg style="left:2140px;top:1148px;" width="16" height="9" viewBox="0 0 16 9"><polygon points="0,0 16,0 8,8.5" fill="#fff"/></svg>
<div style="left:1542px;top:1178px;width:628px;height:46px;background:#2c2c2c;"></div>
<svg style="left:1558px;top:1192px;" width="14" height="18" viewBox="0 0 14 18"><polygon points="1,1 13,9 1,17" fill="#8c8c8c"/></svg>
<span style="top:1177px;height:46px;line-height:46px;font-size:23.4px;color:#fff;white-space:nowrap;letter-spacing:0.326px;left:1585px;">Autopilot</span>
<div style="left:1542px;top:1226px;width:584px;height:46px;background:#2b5446;"></div>
<svg style="left:1556px;top:1242px;" width="18" height="14" viewBox="0 0 18 14"><polygon points="1,1 17,1 9,13" fill="#8f9a96"/></svg>
<span style="top:1225px;height:46px;line-height:46px;font-size:23.4px;color:#fff;white-space:nowrap;letter-spacing:0.368px;left:1585px;">Solid Color</span>
<div style="left:2128px;top:1226px;width:42px;height:46px;background:#2b5446;"></div>
<span style="top:1226px;height:46px;line-height:46px;font-size:23.4px;color:#fff;white-space:nowrap;left:1747px;width:800px;text-align:center;">P</span>
<svg style="left:2151.5px;top:1254px;" width="6" height="5" viewBox="0 0 6 5"><polygon points="0,0 6,0 3,4.5" fill="#fff"/></svg>
<div style="left:1542px;top:1274px;width:172px;height:46px;background:#171614;"></div>
<div style="left:1716px;top:1274px;width:454px;height:46px;background:#171614;"></div>
<span style="top:1273px;height:46px;line-height:46px;font-size:23.4px;color:#fff;white-space:nowrap;letter-spacing:0.408px;right:469px;text-align:right;margin-right:-0.408px;">Color</span>
<svg style="left:1556px;top:1291px;" width="18" height="14" viewBox="0 0 18 14"><polygon points="1,1 17,1 9,13" fill="#8c8c8c"/></svg>
<div style="left:1722px;top:1278px;width:80px;height:35px;background:#fff;border-radius:4px;"></div>
<svg style="left:1847px;top:1282px;" width="30" height="30" viewBox="0 0 30 30"><g transform="rotate(45 15 15)"><rect x="11" y="0" width="8" height="10" rx="3.5" fill="#c8c8c8"/><rect x="8.5" y="8.5" width="13" height="3.6" rx="1" fill="#c8c8c8"/><rect x="11.6" y="12" width="6.8" height="15" rx="3.2" fill="none" stroke="#c8c8c8" stroke-width="2.2"/></g></svg>
<div style="left:1894px;top:1278px;width:180px;height:36px;background:#3b3b3a;border-radius:5px;"></div>
<div style="left:1894px;top:1278px;width:60px;height:36px;background:#83fcd1;border-radius:5px 0 0 5px;"></div>
<span style="top:1278px;height:36px;line-height:36px;font-size:18px;color:#000;white-space:nowrap;letter-spacing:0.633px;left:1524.3px;width:800px;text-align:center;text-indent:0.633px;">PICK</span>
<span style="top:1278px;height:36px;line-height:36px;font-size:18px;color:#fff;white-space:nowrap;letter-spacing:-0.058px;left:1584.2px;width:800px;text-align:center;text-indent:-0.058px;">HSB</span>
<span style="top:1278px;height:36px;line-height:36px;font-size:18px;color:#fff;white-space:nowrap;letter-spacing:0.096px;left:1644px;width:800px;text-align:center;text-indent:0.096px;">RGB</span>
<div style="left:2084px;top:1278px;width:84px;height:36px;background:#3b3b3a;border-radius:5px;"></div>
<span style="top:1278px;height:36px;line-height:36px;font-size:18px;color:#fff;white-space:nowrap;letter-spacing:0.542px;left:1725.8px;width:800px;text-align:center;text-indent:0.542px;">Palette</span>
<div style="left:1542px;top:1322px;width:172px;height:94px;background:#171614;"></div>
<div style="left:1716px;top:1322px;width:454px;height:94px;background:#171614;"></div>
<span style="top:1322px;height:46px;line-height:46px;font-size:23.4px;color:#fff;white-space:nowrap;letter-spacing:0.238px;right:469px;text-align:right;margin-right:-0.238px;">Picker</span>
<div style="left:1722px;top:1328px;width:406px;height:82px;background:linear-gradient(to bottom,rgba(255,255,255,1) 0%,rgba(255,255,255,0) 50%,rgba(0,0,0,0) 50%,rgba(0,0,0,1) 100%),linear-gradient(to right,#f00 0%,#ff0 16.7%,#0f0 33.3%,#0ff 50%,#00f 66.7%,#f0f 83.3%,#f00 100%);"></div>
<div style="left:2128px;top:1328px;width:40px;height:82px;background:linear-gradient(to bottom,#fff,#000);"></div>
<svg style="left:2137px;top:1328px;overflow:hidden;" width="24" height="14" viewBox="0 0 24 14"><circle cx="11.5" cy="1" r="8.5" fill="none" stroke="#222" stroke-width="3"/><circle cx="11.5" cy="1" r="8.5" fill="none" stroke="#eee" stroke-width="1.3"/></svg>
<div style="left:1542px;top:1418px;width:174px;height:94px;background:#2b5446;"></div>
<div style="left:1718px;top:1418px;width:452px;height:94px;background:#2b5446;"></div>
<svg style="left:1558px;top:1431px;" width="14" height="18" viewBox="0 0 14 18"><polygon points="1,1 13,9 1,17" fill="#8f9a96"/></svg>
<div style="left:1606px;top:1426px;width:98px;height:76px;border:2px solid #6f7f7a;"></div>
<svg style="left:1606px;top:1426px;" width="98" height="76" viewBox="0 0 98 76"><g transform="translate(3,2) scale(0.535)"><polygon points="67.9,27.8 94,39.8 83.2,63.9 80.4,46.4 72.3,41.3 65.4,57.6 54.8,63.6 49.7,57.6" fill="#fff"/><polygon points="120.5,34.5 143,67.7 104.2,68.3" fill="#fff"/><polygon points="99,69.5 124.9,96.5 84.4,95.2" fill="#fff"/></g></svg>
<span style="top:1421px;height:34px;line-height:34px;font-size:21px;color:#a9aeac;white-space:nowrap;letter-spacing:0.603px;left:1731px;">Solid Color</span>
<svg style="left:2088px;top:1432px;" width="24" height="24" viewBox="0 0 24 24"><g stroke="#fff" stroke-width="2.6" fill="none"><path d="M5 19 L19 5"/></g><polygon points="11,3 21,3 21,13" fill="#fff"/><polygon points="3,11 3,21 13,21" fill="#fff"/></svg>
<svg style="left:2140px;top:1433px;" width="20" height="20" viewBox="0 0 20 20"><path d="M2 2 L18 18 M18 2 L2 18" stroke="#fff" stroke-width="3" fill="none"/></svg>
<div style="left:2038px;top:1470px;width:128px;height:32px;background:#83fcd1;border-radius:7px;"></div>
<span style="top:1470px;height:32px;line-height:32px;font-size:17px;color:#000;white-space:nowrap;-webkit-text-stroke:0.3px #000;left:1656px;width:800px;text-align:center;">R</span>
<span style="top:1470px;height:32px;line-height:32px;font-size:17px;color:#000;white-space:nowrap;-webkit-text-stroke:0.3px #000;left:1687px;width:800px;text-align:center;">G</span>
<span style="top:1470px;height:32px;line-height:32px;font-size:17px;color:#000;white-space:nowrap;-webkit-text-stroke:0.3px #000;left:1718px;width:800px;text-align:center;">B</span>
<span style="top:1470px;height:32px;line-height:32px;font-size:17px;color:#000;white-space:nowrap;-webkit-text-stroke:0.3px #000;left:1749px;width:800px;text-align:center;">A</span>
<div style="left:1542px;top:1514px;width:584px;height:46px;background:#2b5446;"></div>
<svg style="left:1558px;top:1528px;" width="14" height="18" viewBox="0 0 14 18"><polygon points="1,1 13,9 1,17" fill="#8f9a96"/></svg>
<span style="top:1513px;height:46px;line-height:46px;font-size:23.4px;color:#fff;white-space:nowrap;letter-spacing:0.632px;left:1585px;">Transform</span>
<div style="left:2128px;top:1514px;width:42px;height:46px;background:#2b5446;"></div>
<span style="top:1514px;height:46px;line-height:46px;font-size:23.4px;color:#fff;white-space:nowrap;left:1747px;width:800px;text-align:center;">P</span>
<svg style="left:2151.5px;top:1542px;" width="6" height="5" viewBox="0 0 6 5"><polygon points="0,0 6,0 3,4.5" fill="#fff"/></svg>
<div style="left:1542px;top:1562px;width:488px;height:46px;background:#2b5446;"></div>
<svg style="left:1556px;top:1578px;" width="18" height="14" viewBox="0 0 18 14"><polygon points="1,1 17,1 9,13" fill="#8f9a96"/></svg>
<span style="top:1561px;height:46px;line-height:46px;font-size:23.4px;color:#fff;white-space:nowrap;letter-spacing:0.360px;left:1585px;">Slice Transform</span>
<div style="left:2032px;top:1562px;width:46px;height:46px;background:#2b5446;"></div>
<span style="top:1561px;height:46px;line-height:46px;font-size:23.4px;color:#fff;white-space:nowrap;left:1655px;width:800px;text-align:center;">B</span>
<div style="left:2080px;top:1562px;width:46px;height:46px;background:#2b5446;"></div>
<span style="top:1562px;height:46px;line-height:46px;font-size:23.4px;color:#fff;white-space:nowrap;left:1701px;width:800px;text-align:center;">P</span>
<svg style="left:2105.5px;top:1590px;" width="6" height="5" viewBox="0 0 6 5"><polygon points="0,0 6,0 3,4.5" fill="#fff"/></svg>
<div style="left:2128px;top:1562px;width:42px;height:46px;background:#2b5446;"></div>
<svg style="left:2139px;top:1574.2px;" width="22" height="22" viewBox="0 0 22 22"><path d="M2 2 L20 20 M20 2 L2 20" stroke="#fff" stroke-width="3" fill="none"/></svg>
<div style="left:1542px;top:1610px;width:172px;height:46px;background:#171614;"></div>
<div style="left:1716px;top:1610px;width:454px;height:46px;background:#171614;"></div>
<span style="top:1609px;height:46px;line-height:46px;font-size:23.4px;color:#fff;white-space:nowrap;letter-spacing:-0.052px;right:469px;text-align:right;margin-right:0.052px;">Blend Mode</span>
<span style="top:1609px;height:46px;line-height:46px;font-size:23.4px;color:#fff;white-space:nowrap;letter-spacing:0.228px;left:1728px;">Alpha</span>
<svg style="left:1838px;top:1628px;" width="16" height="9" viewBox="0 0 16 9"><polygon points="0,0 16,0 8,8.5" fill="#fff"/></svg>
<div style="left:1542px;top:1658px;width:172px;height:46px;background:#171614;"></div>
<div style="left:1716px;top:1658px;width:454px;height:46px;background:#171614;"></div>
<span style="top:1657px;height:46px;line-height:46px;font-size:23.4px;color:#fff;white-space:nowrap;letter-spacing:0.006px;right:469px;text-align:right;margin-right:-0.006px;">Opacity</span>
<span style="top:1657px;height:46px;line-height:46px;font-size:23.4px;color:#fff;white-space:nowrap;letter-spacing:-0.974px;left:1728px;">100 %</span>
<div style="left:1828px;top:1664px;width:332px;height:34px;background:#272727;"></div>
<div style="left:2152px;top:1664px;width:8px;height:34px;background:#4c8d77;"></div>
<div style="left:1542px;top:1706px;width:172px;height:46px;background:#171614;"></div>
<div style="left:1716px;top:1706px;width:454px;height:46px;background:#171614;"></div>
<span style="top:1705px;height:46px;line-height:46px;font-size:23.4px;color:#fff;white-space:nowrap;letter-spacing:-0.374px;right:469px;text-align:right;margin-right:0.374px;">Black BG</span>
<div style="left:1725px;top:1718px;width:24px;height:24px;border:2px solid #777;border-radius:5px;background:#1c1c1c;"></div>
<div style="left:1542px;top:1754px;width:172px;height:46px;background:#171614;"></div>
<div style="left:1716px;top:1754px;width:454px;height:46px;background:#171614;"></div>
<span style="top:1753px;height:46px;line-height:46px;font-size:23.4px;color:#fff;white-space:nowrap;letter-spacing:-0.036px;right:469px;text-align:right;margin-right:0.036px;">Scaling</span>
<div style="left:1716px;top:1754px;width:112px;height:46px;background:#83fcd1;"></div>
<span style="top:1754px;height:46px;line-height:46px;font-size:23.4px;color:#000;white-space:nowrap;left:1372px;width:800px;text-align:center;">Fill</span>
<div style="left:1830px;top:1754px;width:112px;height:46px;background:#171614;"></div>
<span style="top:1754px;height:46px;line-height:46px;font-size:23.4px;color:#fff;white-space:nowrap;left:1486px;width:800px;text-align:center;">Fit</span>
<div style="left:1944px;top:1754px;width:112px;height:46px;background:#171614;"></div>
<span style="top:1754px;height:46px;line-height:46px;font-size:23.4px;color:#fff;white-space:nowrap;left:1600px;width:800px;text-align:center;">Stretch</span>
<div style="left:2058px;top:1754px;width:112px;height:46px;background:#171614;"></div>
<span style="top:1754px;height:46px;line-height:46px;font-size:23.4px;color:#fff;white-space:nowrap;left:1716px;width:800px;text-align:center;">Mask</span>
<div style="left:1542px;top:1802px;width:172px;height:142px;background:#171614;"></div>
<span style="top:1802px;height:46px;line-height:46px;font-size:23.4px;color:#fff;white-space:nowrap;letter-spacing:-0.262px;right:469px;text-align:right;margin-right:0.262px;">Slices</span>
<div style="left:1716px;top:1802px;width:314px;height:46px;background:#171614;"></div>
<div style="left:2032px;top:1802px;width:46px;height:46px;background:#171614;"></div>
<div style="left:2080px;top:1802px;width:46px;height:46px;background:#171614;"></div>
<div style="left:2128px;top:1802px;width:42px;height:46px;background:#171614;"></div>
<span style="top:1802px;height:46px;line-height:46px;font-size:23.4px;color:#fff;white-space:nowrap;letter-spacing:0.144px;left:1732px;">Polygon 3</span>
<svg style="left:1850px;top:1811px;" width="180" height="30" viewBox="0 0 180 30"><path d="M14.8 14.5 L23.431 7.98199 A12.3 12.3 0 1 0 23.431 21.018 Z" fill="#83fcd1"/><circle cx="14.7" cy="7.7" r="2.1" fill="#181716"/><path d="M58.2 14.5 L49.569 7.98199 A12.3 12.3 0 1 1 49.569 21.018 Z" fill="#c9c9c9"/><circle cx="58" cy="7.7" r="2.1" fill="#181716"/><path d="M110 14.5 L118.631 7.98199 A12.3 12.3 0 1 0 118.631 21.018 Z" fill="#c9c9c9"/><circle cx="109.9" cy="21.1" r="2.1" fill="#181716"/><path d="M154.2 14.5 L145.569 7.98199 A12.3 12.3 0 1 1 145.569 21.018 Z" fill="#c9c9c9"/><circle cx="154" cy="21.1" r="2.1" fill="#181716"/></svg>
<span style="top:1803.5px;height:46px;line-height:46px;font-size:21.5px;color:#fff;white-space:nowrap;left:1655px;width:800px;text-align:center;">B</span>
<span style="top:1803.5px;height:46px;line-height:46px;font-size:21.5px;color:#fff;white-space:nowrap;left:1702px;width:800px;text-align:center;">S</span>
<span style="top:1803.5px;height:46px;line-height:46px;font-size:21.5px;color:#fff;white-space:nowrap;left:1751px;width:800px;text-align:center;">X</span>
<div style="left:1716px;top:1850px;width:314px;height:46px;background:#171614;"></div>
<div style="left:2032px;top:1850px;width:46px;height:46px;background:#171614;"></div>
<div style="left:2080px;top:1850px;width:46px;height:46px;background:#171614;"></div>
<div style="left:2128px;top:1850px;width:42px;height:46px;background:#171614;"></div>
<span style="top:1850px;height:46px;line-height:46px;font-size:23.4px;color:#fff;white-space:nowrap;letter-spacing:0.144px;left:1732px;">Polygon 2</span>
<svg style="left:1850px;top:1859px;" width="180" height="30" viewBox="0 0 180 30"><path d="M14.8 14.5 L23.431 7.98199 A12.3 12.3 0 1 0 23.431 21.018 Z" fill="#83fcd1"/><circle cx="14.7" cy="7.7" r="2.1" fill="#181716"/><path d="M58.2 14.5 L49.569 7.98199 A12.3 12.3 0 1 1 49.569 21.018 Z" fill="#c9c9c9"/><circle cx="58" cy="7.7" r="2.1" fill="#181716"/><path d="M110 14.5 L118.631 7.98199 A12.3 12.3 0 1 0 118.631 21.018 Z" fill="#c9c9c9"/><circle cx="109.9" cy="21.1" r="2.1" fill="#181716"/><path d="M154.2 14.5 L145.569 7.98199 A12.3 12.3 0 1 1 145.569 21.018 Z" fill="#c9c9c9"/><circle cx="154" cy="21.1" r="2.1" fill="#181716"/></svg>
<span style="top:1851.5px;height:46px;line-height:46px;font-size:21.5px;color:#fff;white-space:nowrap;left:1655px;width:800px;text-align:center;">B</span>
<span style="top:1851.5px;height:46px;line-height:46px;font-size:21.5px;color:#fff;white-space:nowrap;left:1702px;width:800px;text-align:center;">S</span>
<span style="top:1851.5px;height:46px;line-height:46px;font-size:21.5px;color:#fff;white-space:nowrap;left:1751px;width:800px;text-align:center;">X</span>
<div style="left:1716px;top:1898px;width:314px;height:46px;background:#171614;"></div>
<div style="left:2032px;top:1898px;width:46px;height:46px;background:#171614;"></div>
<div style="left:2080px;top:1898px;width:46px;height:46px;background:#171614;"></div>
<div style="left:2128px;top:1898px;width:42px;height:46px;background:#171614;"></div>
<span style="top:1898px;height:46px;line-height:46px;font-size:23.4px;color:#fff;white-space:nowrap;letter-spacing:0.144px;left:1732px;">Polygon 1</span>
<svg style="left:1850px;top:1907px;" width="180" height="30" viewBox="0 0 180 30"><path d="M14.8 14.5 L23.431 7.98199 A12.3 12.3 0 1 0 23.431 21.018 Z" fill="#83fcd1"/><circle cx="14.7" cy="7.7" r="2.1" fill="#181716"/><path d="M58.2 14.5 L49.569 7.98199 A12.3 12.3 0 1 1 49.569 21.018 Z" fill="#c9c9c9"/><circle cx="58" cy="7.7" r="2.1" fill="#181716"/><path d="M110 14.5 L118.631 7.98199 A12.3 12.3 0 1 0 118.631 21.018 Z" fill="#c9c9c9"/><circle cx="109.9" cy="21.1" r="2.1" fill="#181716"/><path d="M154.2 14.5 L145.569 7.98199 A12.3 12.3 0 1 1 145.569 21.018 Z" fill="#c9c9c9"/><circle cx="154" cy="21.1" r="2.1" fill="#181716"/></svg>
<span style="top:1899.5px;height:46px;line-height:46px;font-size:21.5px;color:#fff;white-space:nowrap;left:1655px;width:800px;text-align:center;">B</span>
<span style="top:1899.5px;height:46px;line-height:46px;font-size:21.5px;color:#fff;white-space:nowrap;left:1702px;width:800px;text-align:center;">S</span>
<span style="top:1899.5px;height:46px;line-height:46px;font-size:21.5px;color:#fff;white-space:nowrap;left:1751px;width:800px;text-align:center;">X</span>
<div style="left:1542px;top:1946px;width:488px;height:46px;background:#2b5446;"></div>
<svg style="left:1556px;top:1962px;" width="18" height="14" viewBox="0 0 18 14"><polygon points="1,1 17,1 9,13" fill="#8f9a96"/></svg>
<span style="top:1945px;height:46px;line-height:46px;font-size:23.4px;color:#fff;white-space:nowrap;letter-spacing:-0.139px;left:1585px;">Edge Detection</span>
<div style="left:2032px;top:1946px;width:46px;height:46px;background:#2b5446;"></div>
<span style="top:1945px;height:46px;line-height:46px;font-size:23.4px;color:#fff;white-space:nowrap;left:1655px;width:800px;text-align:center;">B</span>
<div style="left:2080px;top:1946px;width:46px;height:46px;background:#2b5446;"></div>
<span style="top:1946px;height:46px;line-height:46px;font-size:23.4px;color:#fff;white-space:nowrap;left:1701px;width:800px;text-align:center;">P</span>
<svg style="left:2105.5px;top:1974px;" width="6" height="5" viewBox="0 0 6 5"><polygon points="0,0 6,0 3,4.5" fill="#fff"/></svg>
<div style="left:2128px;top:1946px;width:42px;height:46px;background:#2b5446;"></div>
<svg style="left:2139px;top:1958.2px;" width="22" height="22" viewBox="0 0 22 22"><path d="M2 2 L20 20 M20 2 L2 20" stroke="#fff" stroke-width="3" fill="none"/></svg>
<div style="left:1542px;top:1994px;width:172px;height:46px;background:#171614;"></div>
<div style="left:1716px;top:1994px;width:454px;height:46px;background:#171614;"></div>
<span style="top:1993px;height:46px;line-height:46px;font-size:23.4px;color:#fff;white-space:nowrap;letter-spacing:-0.052px;right:469px;text-align:right;margin-right:0.052px;">Blend Mode</span>
<span style="top:1993px;height:46px;line-height:46px;font-size:23.4px;color:#fff;white-space:nowrap;letter-spacing:0.228px;left:1728px;">Alpha</span>
<svg style="left:1838px;top:2012px;" width="16" height="9" viewBox="0 0 16 9"><polygon points="0,0 16,0 8,8.5" fill="#fff"/></svg>
<div style="left:1542px;top:2042px;width:172px;height:46px;background:#171614;"></div>
<div style="left:1716px;top:2042px;width:454px;height:46px;background:#171614;"></div>
<span style="top:2041px;height:46px;line-height:46px;font-size:23.4px;color:#fff;white-space:nowrap;letter-spacing:0.006px;right:469px;text-align:right;margin-right:-0.006px;">Opacity</span>
<span style="top:2041px;height:46px;line-height:46px;font-size:23.4px;color:#fff;white-space:nowrap;letter-spacing:-0.974px;left:1728px;">100 %</span>
<div style="left:1828px;top:2048px;width:332px;height:34px;background:#272727;"></div>
<div style="left:2152px;top:2048px;width:8px;height:34px;background:#4c8d77;"></div>
<div style="left:1542px;top:2090px;width:172px;height:46px;background:#171614;"></div>
<div style="left:1716px;top:2090px;width:454px;height:46px;background:#171614;"></div>
<span style="top:2089px;height:46px;line-height:46px;font-size:23.4px;color:#fff;white-space:nowrap;letter-spacing:0.157px;right:469px;text-align:right;margin-right:-0.157px;">Mode</span>
<span style="top:2089px;height:46px;line-height:46px;font-size:23.4px;color:#fff;white-space:nowrap;left:1728px;">1</span>
<div style="left:1828px;top:2096px;width:332px;height:34px;background:#272727;"></div>
<div style="left:2152px;top:2096px;width:8px;height:34px;background:#4c8d77;"></div>
<span style="top:2090px;height:46px;line-height:46px;font-size:23.4px;color:#6e6e6e;white-space:nowrap;letter-spacing:0.316px;left:1838px;">Sobel</span>
<div style="left:1542px;top:2138px;width:172px;height:46px;background:#171614;"></div>
<div style="left:1716px;top:2138px;width:454px;height:46px;background:#171614;"></div>
<span style="top:2137px;height:46px;line-height:46px;font-size:23.4px;color:#fff;white-space:nowrap;letter-spacing:0.286px;right:469px;text-align:right;margin-right:-0.286px;">Multiplier</span>
<span style="top:2137px;height:46px;line-height:46px;font-size:23.4px;color:#fff;white-space:nowrap;left:1728px;">1</span>
<div style="left:1828px;top:2144px;width:332px;height:34px;background:#272727;"></div>
<div style="left:2152px;top:2144px;width:8px;height:34px;background:#4c8d77;"></div>
<div style="left:1542px;top:2186px;width:172px;height:46px;background:#171614;"></div>
<div style="left:1716px;top:2186px;width:454px;height:46px;background:#171614;"></div>
<svg style="left:1558px;top:2201px;" width="14" height="18" viewBox="0 0 14 18"><polygon points="1,1 13,9 1,17" fill="#8c8c8c"/></svg>
<span style="top:2185px;height:46px;line-height:46px;font-size:23.4px;color:#fff;white-space:nowrap;letter-spacing:0.224px;left:1585px;">Use Color</span>
<div style="left:1725px;top:2198px;width:24px;height:24px;border:2px solid #777;border-radius:5px;background:#1c1c1c;"></div>
<span style="top:2229px;height:40px;line-height:40px;font-size:23.4px;color:#333;white-space:nowrap;letter-spacing:0.180px;left:1457px;width:800px;text-align:center;text-indent:0.180px;">Drop audio, video, mask, source or effect here.</span>
<div style="left:0px;top:2262px;width:2170px;height:4px;background:#000;"></div>
<div style="left:0px;top:2266px;width:2170px;height:32px;background:#2b2b2b;"></div>
<span style="top:2270px;height:36px;line-height:36px;font-size:21.5px;color:#fff;white-space:nowrap;letter-spacing:-0.144px;left:18px;">Resolume Arena 7.1.1</span>
</body></html>
